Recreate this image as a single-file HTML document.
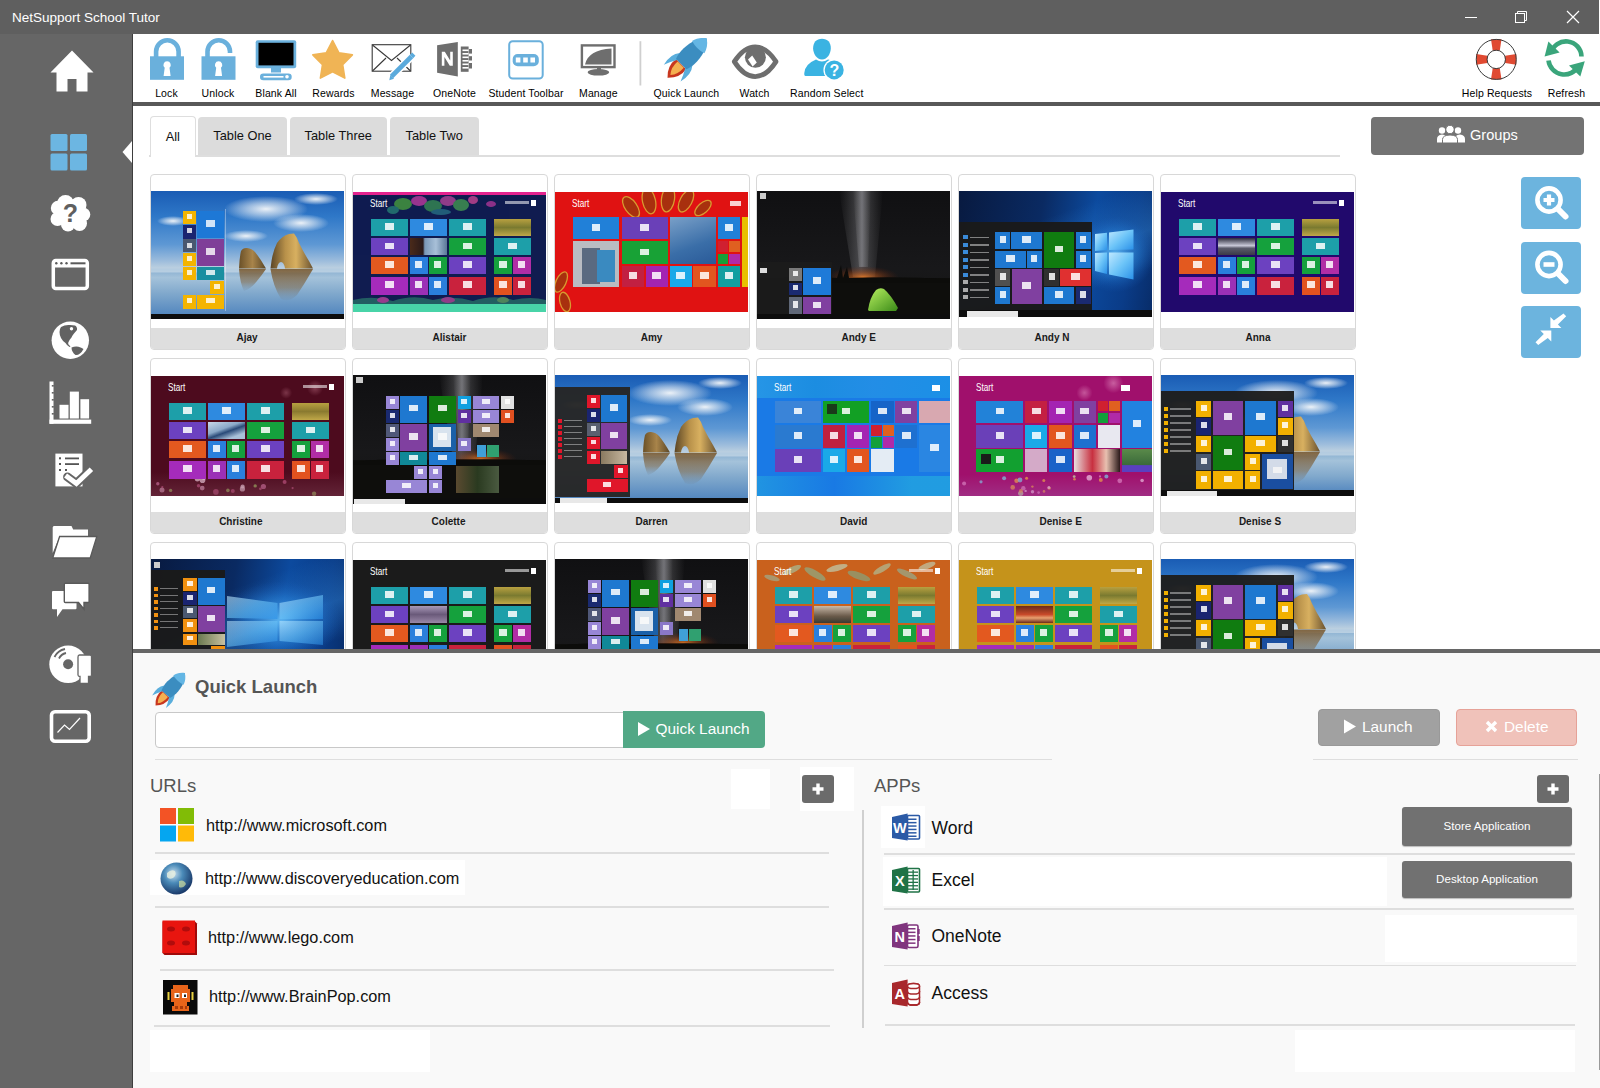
<!DOCTYPE html>
<html><head><meta charset="utf-8">
<style>
*{margin:0;padding:0;box-sizing:border-box}
html,body{width:1600px;height:1088px;overflow:hidden;background:#fff;font-family:"Liberation Sans",sans-serif}
.a{position:absolute}
#title{left:0;top:0;width:1599px;height:34px;background:#5f5f5f;color:#fff;font-size:13.5px}
#side{left:0;top:34px;width:132px;height:1054px;background:#666}
#sideb{left:131.5px;top:34px;width:1.8px;height:1054px;background:#3e3e3e}
#tool{left:133px;top:34px;width:1467px;height:68px;background:#fff}
#toolline{left:133px;top:102px;width:1467px;height:4px;background:#585858}
#content{left:133px;top:106px;width:1467px;height:543px;background:#fff;overflow:hidden}
#panelline{left:133px;top:649px;width:1467px;height:4px;background:#666}
#panel{left:133px;top:653px;width:1467px;height:435px;background:#f9f9f9}
.tl{font-size:10.5px;color:#000;letter-spacing:0.12px;text-align:center;white-space:nowrap;top:86.8px}
</style></head><body>
<div id="title" class="a"><span class="a" style="left:12px;top:10px">NetSupport School Tutor</span>
<svg class="a" style="left:1460px;top:8px" width="130" height="20" viewBox="0 0 130 20">
<line x1="5" y1="9.5" x2="17" y2="9.5" stroke="#fff" stroke-width="1"/>
<rect x="55.5" y="5.5" width="9" height="9" fill="none" stroke="#fff" stroke-width="1"/>
<path d="M57.5 5.5V3.5h9v9h-2" fill="none" stroke="#fff" stroke-width="1"/>
<path d="M107 3L119 15M119 3L107 15" stroke="#fff" stroke-width="1.2"/>
</svg>
</div>
<div id="side" class="a"></div>
<div id="sideb" class="a"></div>
<svg class="a" style="left:0;top:0" width="132" height="1088" viewBox="0 0 132 1088">
<!-- home -->
<path d="M72 50.5L93.5 72.5H87.5V91.5H76.5V79H67.5V91.5H56.5V72.5H50.5Z" fill="#fff"/>
<!-- grid -->
<g fill="#6cb6e2"><rect x="50.5" y="134" width="17" height="17" rx="1.5"/><rect x="70" y="134" width="17" height="17" rx="1.5"/><rect x="50.5" y="153.5" width="17" height="17" rx="1.5"/><rect x="70" y="153.5" width="17" height="17" rx="1.5"/></g>
<!-- cloud -->
<g fill="#fff"><ellipse cx="70" cy="213.5" rx="15" ry="12"/><circle cx="65.5" cy="203.5" r="8.5"/><circle cx="78.5" cy="205" r="8"/><circle cx="83.5" cy="214.5" r="6.8"/><circle cx="79.5" cy="223.5" r="7.5"/><circle cx="68" cy="224.5" r="7"/><circle cx="57.5" cy="219" r="7"/><circle cx="58" cy="208" r="7.2"/></g>
<text x="70.5" y="221.5" font-family="Liberation Sans" font-weight="700" font-size="25" fill="#5f5f5f" text-anchor="middle">?</text>
<!-- browser -->
<rect x="53.3" y="260.5" width="34" height="28" rx="2.5" fill="none" stroke="#fff" stroke-width="3.5"/>
<rect x="53" y="260" width="34.5" height="7.5" fill="#fff"/>
<g fill="#5a5a5a"><circle cx="56.3" cy="263.3" r="1.2"/><circle cx="61.4" cy="263.3" r="1.2"/><circle cx="66.5" cy="263.3" r="1.2"/><rect x="70.5" y="262.3" width="15" height="2"/></g>
<!-- globe -->
<circle cx="70.3" cy="340.3" r="18.7" fill="#fff"/>
<path d="M61 327Q65 324.5 70 325L75 325.5Q77.5 327 77 330L74 333.5Q72 336 71.5 337.5Q69.5 339.5 69 341Q67.5 343 68.5 344.5L70.5 346.5L69.5 347Q66.5 345 65.5 343Q62.5 341 61 338Q59.5 335 59.5 332Q59.5 329 61 327Z" fill="#626262"/>
<circle cx="71.5" cy="328.8" r="1.7" fill="#fff"/>
<path d="M71.5 347.5Q75 346 78.5 346.7Q81.5 347.5 83.5 349Q82 352 80 353.5Q77.5 355.5 75.5 355Q73.5 353.5 72.5 351.5Q71.5 349.5 71.5 347.5Z" fill="#626262"/>
<!-- chart -->
<g fill="#fff"><rect x="49.5" y="381.5" width="4" height="42.3"/><rect x="49.5" y="419.6" width="41.7" height="4.2"/>
<rect x="59.5" y="404.8" width="9" height="13.7"/><rect x="69.8" y="391.6" width="9.1" height="26.9"/><rect x="80.4" y="399.2" width="8.7" height="19.3"/></g>
<g fill="#666"><rect x="51.8" y="385" width="2" height="1.6"/><rect x="51.8" y="392" width="2" height="1.6"/><rect x="51.8" y="399" width="2" height="1.6"/><rect x="51.8" y="406" width="2" height="1.6"/><rect x="51.8" y="413" width="2" height="1.6"/></g>
<!-- checklist -->
<rect x="55.4" y="453.6" width="27.1" height="32.8" fill="#fff"/>
<g fill="#555"><rect x="59" y="457.3" width="2" height="2"/><rect x="59" y="463" width="2" height="2"/><rect x="59" y="469" width="2" height="2"/><rect x="65" y="469" width="2" height="2"/><rect x="65" y="457.5" width="14" height="1.8"/><rect x="65" y="463.2" width="14" height="1.8"/></g>
<path d="M67.6 477L76.4 483.5L89.6 471" fill="none" stroke="#666" stroke-width="9" stroke-linejoin="miter" stroke-linecap="round"/>
<path d="M67.6 477L76.4 483.5L89.6 471" fill="none" stroke="#fff" stroke-width="5" stroke-linejoin="miter" stroke-linecap="square"/>
<!-- folder -->
<path d="M52.7 556V527.5Q52.7 526 54 526H71.5L73.2 529.4H88V536.5H59.6L52.7 553Z" fill="#fff"/>
<path d="M59.6 536.5H96.8L90.2 558H52.7Z" fill="#fff" stroke="#5a5a5a" stroke-width="1.3"/>
<!-- chat -->
<path d="M53 591H75.5Q76.5 591 76.5 592V608.2Q76.5 609.2 75.5 609.2H62.5L57 616.9V609.2H53Q52 609.2 52 608.2V592Q52 591 53 591Z" fill="#fff"/>
<path d="M65.3 583.2H88.1Q89.1 583.2 89.1 584.2V601.5Q89.1 602.5 88.1 602.5H84V609.2L78.5 602.5H65.3Q64.3 602.5 64.3 601.5V584.2Q64.3 583.2 65.3 583.2Z" fill="#fff" stroke="#5a5a5a" stroke-width="1.4"/>
<!-- disc -->
<circle cx="68.1" cy="664.3" r="18.8" fill="#fff"/>
<circle cx="68.1" cy="664.3" r="5" fill="#666"/>
<path d="M54.5 657A15 15 0 0 1 65 649" fill="none" stroke="#666" stroke-width="1.8"/>
<path d="M59 658.5A10.5 10.5 0 0 1 66 653" fill="none" stroke="#666" stroke-width="1.8"/>
<path d="M79.5 655H90Q91.5 655 91.5 656.5V675Q91.5 676.5 90 676.5H88.5V683.5H80V676.5Q78 676.5 78 675V657Q78 655 79.5 655Z" fill="#fff" stroke="#666" stroke-width="1.3"/>
<!-- monitor -->
<rect x="51.5" y="711.8" width="37.7" height="29.5" rx="3.5" fill="none" stroke="#fff" stroke-width="3.6"/>
<path d="M57.5 732.5L64.5 725L69.5 729.5L80 718" fill="none" stroke="#fff" stroke-width="1.2"/>
<!-- notch -->
<path d="M132 141L122.5 152L132 163Z" fill="#fff"/>
</svg>
<div id="tool" class="a"></div>
<div id="toolline" class="a"></div>
<svg class="a" style="left:0;top:0" width="1600" height="100" viewBox="0 0 1600 100">
<!-- lock -->
<path d="M156.1 58V51.5A11.25 11.25 0 0 1 178.6 51.5V58" fill="none" stroke="#6ab0dc" stroke-width="4.6"/>
<rect x="150" y="56.3" width="34" height="23.5" fill="#6ab0dc"/>
<path d="M167.1 61.3A3.7 3.7 0 0 1 169.5 67.8L170.6 76H163.6L164.7 67.8A3.7 3.7 0 0 1 167.1 61.3Z" fill="#fff"/>
<!-- unlock -->
<path d="M207.5 58V51.5A11.25 11.25 0 0 1 230 51.5V53" fill="none" stroke="#6ab0dc" stroke-width="4.6"/>
<rect x="201.5" y="56.3" width="34" height="23.5" fill="#6ab0dc"/>
<path d="M218.6 61.3A3.7 3.7 0 0 1 221 67.8L222.1 76H215.1L216.2 67.8A3.7 3.7 0 0 1 218.6 61.3Z" fill="#fff"/>
<!-- blank all -->
<rect x="255.7" y="40.2" width="40.5" height="28" rx="2" fill="#6ab0dc"/>
<rect x="258.5" y="42.8" width="35" height="22.6" fill="#000"/>
<rect x="271" y="68" width="10" height="4.5" fill="#6ab0dc"/>
<rect x="260" y="73.5" width="31.7" height="6.7" rx="3.3" fill="#6ab0dc"/>
<rect x="263.5" y="76" width="20" height="1.6" fill="#fff"/>
<circle cx="287" cy="76.8" r="1.8" fill="#fff"/>
<!-- star -->
<path d="M332.60 40.50L338.83 52.72L352.38 54.87L342.68 64.58L344.83 78.13L332.60 71.90L320.37 78.13L322.52 64.58L312.82 54.87L326.37 52.72Z" fill="#f0b455" stroke="#f0b455" stroke-width="1.6" stroke-linejoin="round"/>
<!-- message -->
<rect x="372.2" y="44.7" width="38.6" height="26.5" fill="#fff" stroke="#3a3a3a" stroke-width="1.1"/>
<path d="M372.5 45L391.5 60.5L410.5 45M372.5 71L386 58M410.5 71L397 58" fill="none" stroke="#3a3a3a" stroke-width="1.1"/>
<path d="M391 77L412 56" stroke="#fff" stroke-width="8"/>
<path d="M391.5 76.5L411.5 56.5" stroke="#5aaadc" stroke-width="4.6"/>
<path d="M389.3 80.3L390.3 75L394 78.7Z" fill="#5aaadc"/>
<path d="M411.5 56.5L413.8 54.2" stroke="#5aaadc" stroke-width="4.6"/>
<!-- onenote -->
<path d="M437.1 45.3L457.8 41.9V76.6L437.1 72.7Z" fill="#6e6e6e"/>
<path d="M441.8 65.8V51.8H444.8L450.2 60.6V51.8H452.8V65.8H449.8L444.4 57V65.8Z" fill="#fff"/>
<rect x="460.8" y="46.5" width="7.8" height="25.3" fill="#6e6e6e"/>
<g fill="#fff"><rect x="462.5" y="49.5" width="6" height="1.6"/><rect x="462.5" y="53" width="6" height="1.6"/><rect x="462.5" y="56.5" width="6" height="1.6"/><rect x="462.5" y="60" width="6" height="1.6"/><rect x="462.5" y="63.5" width="6" height="1.6"/><rect x="462.5" y="67" width="6" height="1.6"/></g>
<g fill="#6e6e6e"><rect x="469" y="49" width="3" height="4.6"/><rect x="469" y="56.2" width="3" height="4.3"/><rect x="469" y="63" width="3" height="5.5"/></g>
<!-- student toolbar -->
<rect x="509.2" y="41.2" width="33.5" height="37.3" rx="3.5" fill="none" stroke="#6ab0dc" stroke-width="2"/>
<rect x="512.7" y="54" width="26.1" height="12.3" rx="5" fill="#6ab0dc"/>
<g fill="#fff"><rect x="515.8" y="57.5" width="4.6" height="5"/><rect x="523.2" y="57.5" width="4.6" height="5"/><rect x="530.4" y="57.5" width="4.6" height="5"/></g>
<!-- manage -->
<rect x="581.9" y="45.4" width="32.6" height="21.7" fill="none" stroke="#6e6e6e" stroke-width="2.4"/>
<path d="M585 64.5Q588 50 611.5 48.5V64.5Z" fill="#6e6e6e"/>
<path d="M597 67H601V70H597Z" fill="#6e6e6e"/>
<ellipse cx="598.4" cy="72.3" rx="10.8" ry="3.3" fill="#6e6e6e"/>
<!-- separator -->
<rect x="639.5" y="41.2" width="1.8" height="44.3" fill="#cfcfcf"/>
<!-- rocket -->
<g transform="translate(680.7,64.6) rotate(45) scale(1.27)">
<path d="M-5.6 -0.5Q-7 8 0 14.7Q7 8 5.6 -0.5Z" fill="#c8361e"/>
<path d="M-3.4 0Q-4 7 0 11.5Q4 7 3.4 0Z" fill="#f4b050"/>
<path d="M-7 -6Q-11.8 -0.5 -9.3 9.5Q-7.5 4.5 -4.5 -0.5Z" fill="#5aaedc"/>
<path d="M7 -6Q11.8 -0.5 9.3 9.5Q7.5 4.5 4.5 -0.5Z" fill="#5aaedc"/>
<path d="M0 -29C5.5 -25 7.6 -16 7.4 -8Q7 -3 5.7 -0.5H-5.7Q-7 -3 -7.4 -8C-7.6 -16 -5.5 -25 0 -29Z" fill="#3b8dc0"/>
<path d="M0 -29C3.8 -26.5 6 -23 6.9 -19.5Q0 -17.5 -6.9 -19.5C-6 -23 -3.8 -26.5 0 -29Z" fill="#64b6e4"/>
</g>
<!-- eye -->
<path d="M734.3 61.6Q744 46.8 755.2 46.8Q766.4 46.8 776 61.6Q766.4 76.6 755.2 76.6Q744 76.6 734.3 61.6Z" fill="none" stroke="#6e6e6e" stroke-width="4.8" stroke-linejoin="round"/>
<circle cx="755.4" cy="57.3" r="10.5" fill="#6e6e6e"/>
<path d="M748 59.5L752.2 55.5L756.8 62.5L752.6 66.5Z" fill="#fff"/>
<!-- random select -->
<path d="M822 38.8C827.5 38.8 831 42.5 830.8 48.5C830.6 53.5 827.5 59.5 822 59.5C816.5 59.5 813.3 53.5 813.1 48.5C813 42.5 816.5 38.8 822 38.8Z" fill="#3ab3e2"/>
<path d="M816 59.5Q822 63.5 828 59.5Q836 61 838 66L830 76H805.5Q804 76 804.3 73Q805 64 816 59.5Z" fill="#3ab3e2"/>
<circle cx="834.2" cy="69.9" r="10.8" fill="#fff"/>
<circle cx="834.2" cy="69.9" r="9.5" fill="#3ab3e2"/>
<text x="834.5" y="76.3" font-family="Liberation Sans" font-weight="700" font-size="16" fill="#fff" text-anchor="middle">?</text>
<!-- help requests -->
<circle cx="1496.25" cy="59.4" r="14.6" fill="none" stroke="#fff" stroke-width="11.3"/>
<g fill="#e04a32">
<path d="M1491 39.3H1501.5L1499.8 50.5H1492.7Z"/>
<path d="M1491 79.5H1501.5L1499.8 68.3H1492.7Z"/>
<path d="M1476.2 54H1476.2L1487.4 55.8V63L1476.2 64.8Z"/>
<path d="M1516.3 54L1505.1 55.8V63L1516.3 64.8Z"/>
</g>
<circle cx="1496.25" cy="59.4" r="20" fill="none" stroke="#3a3a3a" stroke-width="1"/>
<circle cx="1496.25" cy="59.4" r="9.2" fill="none" stroke="#3a3a3a" stroke-width="1"/>
<!-- refresh -->
<path d="M1551 53A15.5 15.5 0 0 1 1581.5 56.5" fill="none" stroke="#3aa57b" stroke-width="4.6"/>
<path d="M1548.4 41.4L1544.6 56.5L1559.6 52.6Z" fill="#3aa57b"/>
<path d="M1548.5 60.5A16 16 0 0 0 1578.5 66" fill="none" stroke="#3aa57b" stroke-width="4.6"/>
<path d="M1584.8 61.25L1569 65.4L1580.3 76.6Z" fill="#3aa57b"/>
</svg>
<div class="a tl" style="left:126.5px;width:80px">Lock</div>
<div class="a tl" style="left:178px;width:80px">Unlock</div>
<div class="a tl" style="left:236px;width:80px">Blank All</div>
<div class="a tl" style="left:293.5px;width:80px">Rewards</div>
<div class="a tl" style="left:352.5px;width:80px">Message</div>
<div class="a tl" style="left:414.5px;width:80px">OneNote</div>
<div class="a tl" style="left:486px;width:80px">Student Toolbar</div>
<div class="a tl" style="left:558.4px;width:80px">Manage</div>
<div class="a tl" style="left:646.4px;width:80px">Quick Launch</div>
<div class="a tl" style="left:714.5px;width:80px">Watch</div>
<div class="a tl" style="left:786.8px;width:80px">Random Select</div>
<div class="a tl" style="left:1457px;width:80px">Help Requests</div>
<div class="a tl" style="left:1526.5px;width:80px">Refresh</div>
<div id="content" class="a"></div>
<div id="panelline" class="a"></div>
<div id="panel" class="a"></div>
<!--CONTENT-->
<style>
.tab{position:absolute;top:117px;height:38px;background:#dcdcdc;border-radius:4px 4px 0 0;font-size:12.8px;color:#111;text-align:center;line-height:37px}
.btnz{position:absolute;left:1521px;width:60px;height:52px;background:#6cb4de;border-radius:4px}
</style>
<div class="a" style="left:149px;top:155px;width:1191px;height:1.5px;background:#dedede"></div>
<div class="tab" style="left:149.5px;top:116px;width:46.5px;height:41px;background:#fff;border:1px solid #dedede;border-bottom:none;line-height:40px">All</div>
<div class="tab" style="left:198px;width:89px">Table One</div>
<div class="tab" style="left:289.5px;width:97.5px">Table Three</div>
<div class="tab" style="left:390px;width:88.5px">Table Two</div>
<div class="a" style="left:1371px;top:116.5px;width:213px;height:38px;background:#737373;border-radius:4px"></div>
<svg class="a" style="left:1436px;top:125px" width="30" height="20" viewBox="0 0 30 20">
<g fill="#fff">
<circle cx="6" cy="5.5" r="3.2"/><path d="M1 17.5V14Q1 10 6 9.5Q9 9.5 10 11L8 17.5Z"/>
<circle cx="22" cy="5.5" r="3.2"/><path d="M29 17.5V14Q29 10 24 9.5Q21 9.5 20 11L22 17.5Z"/>
<circle cx="14" cy="4.5" r="4.2" stroke="#737373" stroke-width="1"/><path d="M6.5 18V14.5Q6.5 10.2 14 10Q21.5 10.2 21.5 14.5V18Z" stroke="#737373" stroke-width="1"/>
</g></svg>
<div class="a" style="left:1470px;top:126px;font-size:14.6px;color:#fff;line-height:18px">Groups</div>
<div class="btnz" style="top:177px"></div>
<div class="btnz" style="top:241.5px"></div>
<div class="btnz" style="top:306px"></div>
<svg class="a" style="left:1521px;top:177px" width="60" height="182" viewBox="0 0 60 182">
<g fill="none" stroke="#fff">
<circle cx="28" cy="23" r="11.6" stroke-width="4.6"/>
<path d="M37 32L44.5 39.5" stroke-width="6" stroke-linecap="round"/>
<path d="M28 17.5V28.5M22.5 23H33.5" stroke-width="4.2"/>
<circle cx="28" cy="87.5" r="11.6" stroke-width="4.6"/>
<path d="M37 96.5L44.5 104" stroke-width="6" stroke-linecap="round"/>
<path d="M22.5 87.5H33.5" stroke-width="4.6"/>
</g>
<g fill="#fff">
<path d="M17.2 168L14.5 165.3L22.8 157L19.3 153.5H30.3V164.5L26.8 161Z"/>
<path d="M42.5 136.5L45.2 139.2L36.9 147.5L40.4 151H29.4V140L32.9 143.5Z"/>
</g>
</svg>
<!--/CONTENT-->
<!--THUMBS-->
<svg width="0" height="0" style="position:absolute"><defs>
<linearGradient id="rkA" x1="0" x2="1" y1="0" y2="0"><stop offset="0" stop-color="#5a4526"/><stop offset=".35" stop-color="#b8914a"/><stop offset=".6" stop-color="#d8b060"/><stop offset="1" stop-color="#6a5230"/></linearGradient>
<linearGradient id="rkB" x1="0" x2="1" y1="0" y2="0"><stop offset="0" stop-color="#6a5028"/><stop offset=".5" stop-color="#a8844a"/><stop offset="1" stop-color="#5a4626"/></linearGradient>
<linearGradient id="rfl" x1="0" x2="0" y1="0" y2="1"><stop offset="0" stop-color="#7a5a30" stop-opacity=".9"/><stop offset=".6" stop-color="#806848" stop-opacity=".55"/><stop offset="1" stop-color="#708090" stop-opacity=".1"/></linearGradient>
<radialGradient id="cld"><stop offset="0" stop-color="#f6f8fa" stop-opacity=".95"/><stop offset=".45" stop-color="#e8eef4" stop-opacity=".6"/><stop offset="1" stop-color="#f4f6f8" stop-opacity="0"/></radialGradient>
<radialGradient id="glow"><stop offset="0" stop-color="#e07828" stop-opacity=".9"/><stop offset=".5" stop-color="#a04818" stop-opacity=".45"/><stop offset="1" stop-color="#602010" stop-opacity="0"/></radialGradient>
<radialGradient id="hglow"><stop offset="0" stop-color="#6cc8ff" stop-opacity=".8"/><stop offset=".6" stop-color="#2a88e0" stop-opacity=".4"/><stop offset="1" stop-color="#1a60c0" stop-opacity="0"/></radialGradient>
<linearGradient id="pane" x1="0" x2="1" y1="0" y2="1"><stop offset="0" stop-color="#bfe8ff"/><stop offset=".5" stop-color="#6cc4f8"/><stop offset="1" stop-color="#2a90e8"/></linearGradient>
<linearGradient id="mw" x1="0" x2="1" y1="0" y2="0"><stop offset="0" stop-color="#888" stop-opacity="0"/><stop offset=".5" stop-color="#9a9aa0" stop-opacity=".75"/><stop offset="1" stop-color="#888" stop-opacity="0"/></linearGradient>
</defs></svg>
<style>
.grid{position:absolute;left:133px;top:106px;width:1380px;height:543px;overflow:hidden}
.card{position:absolute;width:196px;height:176px;border:1.5px solid #d8d8d8;border-radius:4px;background:#fff;overflow:hidden}
.card .im{position:absolute;left:0;width:193px;overflow:hidden}
.card .im i,.card .im b{position:absolute;display:block;font-style:normal;font-weight:normal;line-height:1}
.card .lb{position:absolute;left:0;right:0;top:152.5px;height:24px;background:#dedede;font-size:10px;font-weight:bold;color:#1a1a1a;text-align:center;line-height:19px}
</style>
<div class="grid">
<div class="card" style="left:17px;top:68px"><div class="im" style="top:16px;height:128px;background:linear-gradient(180deg,#1a5cb4 0%,#2f78c8 20.0%,#5e98d4 41.8%,#9cbcdc 54.5%,#bcd0e0 60.3%,#86aed0 61.1%,#a4c2da 67.6%,#80a8cc 80.1%,#4a80bc 100%)"><svg style="position:absolute;left:0;top:0" width="193" height="128" viewBox="0 0 193 128"><ellipse cx="115" cy="18" rx="42" ry="13" fill="url(#cld)"/><ellipse cx="150" cy="32" rx="28" ry="9" fill="url(#cld)"/><ellipse cx="95" cy="45" rx="22" ry="6" fill="url(#cld)"/><ellipse cx="165" cy="8" rx="22" ry="6" fill="url(#cld)"/><ellipse cx="22" cy="30" rx="16" ry="5" fill="url(#cld)"/><g transform="translate(0,0)"><rect x="-12" y="77.5" width="217" height="4" fill="#d8e4ec" opacity=".55"/><path d="M88 78Q89 92 93 100Q100 98 106 90Q111 84 115 78Z" fill="url(#rfl)"/><path d="M119.5 78Q122 95 130 108Q138 112 146 104Q154 92 162 78Z" fill="url(#rfl)"/><path d="M88 77.5Q88.5 66 90 60Q92 56.5 96 57Q101 57.5 104 61Q109 67 115 77.5Z" fill="url(#rkB)"/><path d="M119.5 77.5L120.5 70Q122 60 126 52Q131 45 138 43L143 42.5Q146 46 148 52Q153 62 158 70L162 77.5H134Q133 71 130 71Q127 71 126 77.5Z" fill="url(#rkA)"/></g></svg><i style="left:32.0px;top:20.0px;width:12.8px;height:13.0px;background:#f4b400;"></i><i style="left:35.8px;top:23.0px;width:5.1px;height:4.9px;background:rgba(255,255,255,.8)"></i><i style="left:32.0px;top:34.0px;width:12.8px;height:13.5px;background:#1a2470;"></i><i style="left:35.8px;top:37.2px;width:5.1px;height:5.1px;background:rgba(255,255,255,.8)"></i><i style="left:32.0px;top:48.4px;width:12.8px;height:13.1px;background:#4a5870;"></i><i style="left:35.8px;top:51.5px;width:5.1px;height:5.0px;background:rgba(255,255,255,.8)"></i><i style="left:32.0px;top:62.0px;width:12.8px;height:13.0px;background:#f4b400;"></i><i style="left:35.8px;top:65.0px;width:5.1px;height:4.9px;background:rgba(255,255,255,.8)"></i><i style="left:32.0px;top:76.0px;width:12.8px;height:13.0px;background:#f4b400;"></i><i style="left:35.8px;top:79.0px;width:5.1px;height:4.9px;background:rgba(255,255,255,.8)"></i><i style="left:46.0px;top:20.0px;width:26.8px;height:27.0px;background:#1d78d6;"></i><i style="left:55.1px;top:29.2px;width:8.5px;height:6.5px;background:rgba(255,255,255,.8)"></i><i style="left:46.0px;top:48.0px;width:26.8px;height:27.0px;background:#7f3e98;"></i><i style="left:55.1px;top:57.2px;width:8.5px;height:6.5px;background:rgba(255,255,255,.8)"></i><i style="left:46.0px;top:76.0px;width:26.8px;height:13.0px;background:#1a8fa0;"></i><i style="left:55.1px;top:79.0px;width:8.5px;height:4.9px;background:rgba(255,255,255,.8)"></i><i style="left:59.0px;top:90.0px;width:13.8px;height:13.0px;background:#f4b400;"></i><i style="left:63.1px;top:93.0px;width:5.5px;height:4.9px;background:rgba(255,255,255,.8)"></i><i style="left:32.0px;top:104.0px;width:12.8px;height:13.5px;background:#f4b400;"></i><i style="left:35.8px;top:107.2px;width:5.1px;height:5.1px;background:rgba(255,255,255,.8)"></i><i style="left:46.0px;top:104.0px;width:26.8px;height:13.5px;background:#f4b400;"></i><i style="left:55.1px;top:107.2px;width:8.5px;height:5.1px;background:rgba(255,255,255,.8)"></i><i style="left:73.8px;top:18.0px;width:0.8px;height:102.0px;background:rgba(255,255,255,.35);"></i><i style="left:0.0px;top:123.0px;width:193.0px;height:5.0px;background:#0d0d0d;"></i></div><div class="lb"><span style="position:relative;left:-1px">Ajay</span></div></div>
<div class="card" style="left:219px;top:68px"><div class="im" style="top:16.5px;height:120px;background:#101c50"><i style="left:0.0px;top:0.0px;width:193.0px;height:3.5px;background:#e4238e;"></i><svg style="position:absolute;left:0;top:0" width="193" height="120" viewBox="0 0 193 120"><g opacity=".7"><ellipse cx="50" cy="12" rx="9" ry="6" fill="#4fae3a"/><ellipse cx="66" cy="9" rx="8" ry="5" fill="#d43fa8"/><ellipse cx="80" cy="14" rx="9" ry="6" fill="#3c9a52"/><ellipse cx="95" cy="9" rx="8" ry="5" fill="#c84aa0"/><ellipse cx="108" cy="13" rx="8" ry="6" fill="#4aa850"/><ellipse cx="120" cy="8" rx="5" ry="4" fill="#e04a9a"/><ellipse cx="40" cy="18" rx="6" ry="4" fill="#2a8a7a"/><ellipse cx="88" cy="20" rx="10" ry="3" fill="#2a7a8a"/><ellipse cx="138" cy="12" rx="5" ry="3" fill="#c03aa0"/><path d="M0 108Q20 103 40 109Q60 102 80 108Q100 103 120 109Q140 102 160 108Q178 104 193 108V113H0Z" fill="#2a7a6a"/><ellipse cx="30" cy="108" rx="6" ry="3" fill="#d04aa8"/><ellipse cx="95" cy="108" rx="7" ry="3" fill="#c84aa0"/><ellipse cx="150" cy="108" rx="6" ry="3" fill="#6ab060"/></g></svg><i style="left:0.0px;top:112.0px;width:193.0px;height:8.0px;background:#48d4a8;"></i><i style="left:18.2px;top:27.4px;width:36.8px;height:17.2px;background:#1d9fa9;"></i><i style="left:32.4px;top:31.8px;width:8.5px;height:6.5px;background:rgba(255,255,255,.85)"></i><i style="left:56.6px;top:27.4px;width:37.2px;height:17.2px;background:#2e8ae0;"></i><i style="left:71.0px;top:31.8px;width:8.5px;height:6.5px;background:rgba(255,255,255,.85)"></i><i style="left:95.6px;top:27.4px;width:37.2px;height:17.2px;background:#1d9fa9;"></i><i style="left:110.0px;top:31.8px;width:8.5px;height:6.5px;background:rgba(255,255,255,.85)"></i><i style="left:141.0px;top:27.4px;width:37.0px;height:17.2px;background:linear-gradient(180deg,#b8a040,#7a7a30 50%,#c0a848);"></i><i style="left:18.2px;top:46.6px;width:36.8px;height:17.2px;background:#6c41c0;"></i><i style="left:32.4px;top:51.0px;width:8.5px;height:6.5px;background:rgba(255,255,255,.85)"></i><i style="left:56.6px;top:46.6px;width:37.2px;height:17.2px;background:linear-gradient(90deg,#4a2a1a 0%,#2a1a1a 35%,#7a98b8 40%,#a8c0d8 70%,#5a7898 100%);"></i><i style="left:95.6px;top:46.6px;width:37.2px;height:17.2px;background:#15a13d;"></i><i style="left:110.0px;top:51.0px;width:8.5px;height:6.5px;background:rgba(255,255,255,.85)"></i><i style="left:141.0px;top:46.6px;width:37.0px;height:17.2px;background:#1d9fa9;"></i><i style="left:155.2px;top:51.0px;width:8.5px;height:6.5px;background:rgba(255,255,255,.85)"></i><i style="left:18.2px;top:65.6px;width:36.8px;height:17.2px;background:#e3591f;"></i><i style="left:32.4px;top:69.9px;width:8.5px;height:6.5px;background:rgba(255,255,255,.85)"></i><i style="left:56.6px;top:65.6px;width:18.4px;height:17.2px;background:#2a7fdc;"></i><i style="left:62.1px;top:69.9px;width:7.4px;height:6.5px;background:rgba(255,255,255,.85)"></i><i style="left:75.5px;top:65.6px;width:18.3px;height:17.2px;background:#15a13d;"></i><i style="left:81.0px;top:69.9px;width:7.3px;height:6.5px;background:rgba(255,255,255,.85)"></i><i style="left:95.6px;top:65.6px;width:37.2px;height:17.2px;background:#6c41c0;"></i><i style="left:110.0px;top:69.9px;width:8.5px;height:6.5px;background:rgba(255,255,255,.85)"></i><i style="left:141.0px;top:65.6px;width:18.0px;height:17.2px;background:#15a13d;"></i><i style="left:146.4px;top:69.9px;width:7.2px;height:6.5px;background:rgba(255,255,255,.85)"></i><i style="left:159.5px;top:65.6px;width:18.5px;height:17.2px;background:#b12da6;"></i><i style="left:165.1px;top:69.9px;width:7.4px;height:6.5px;background:rgba(255,255,255,.85)"></i><i style="left:18.2px;top:85.0px;width:36.8px;height:18.0px;background:#a52bbb;"></i><i style="left:32.4px;top:89.8px;width:8.5px;height:6.5px;background:rgba(255,255,255,.85)"></i><i style="left:56.6px;top:85.0px;width:18.4px;height:18.0px;background:#9b30b6;"></i><i style="left:62.1px;top:89.8px;width:7.4px;height:6.5px;background:rgba(255,255,255,.85)"></i><i style="left:75.5px;top:85.0px;width:18.3px;height:18.0px;background:#2a7fdc;"></i><i style="left:81.0px;top:89.8px;width:7.3px;height:6.5px;background:rgba(255,255,255,.85)"></i><i style="left:95.6px;top:85.0px;width:37.2px;height:18.0px;background:#c9223d;"></i><i style="left:110.0px;top:89.8px;width:8.5px;height:6.5px;background:rgba(255,255,255,.85)"></i><i style="left:141.0px;top:85.0px;width:18.0px;height:18.0px;background:#e2521f;"></i><i style="left:146.4px;top:89.8px;width:7.2px;height:6.5px;background:rgba(255,255,255,.85)"></i><i style="left:159.5px;top:85.0px;width:18.5px;height:18.0px;background:#c9223d;"></i><i style="left:165.1px;top:89.8px;width:7.4px;height:6.5px;background:rgba(255,255,255,.85)"></i><b style="left:17px;top:6px;font-size:10.5px;color:#fff;transform:scaleX(.78);transform-origin:0 0">Start</b><i style="left:152.0px;top:9.0px;width:24.0px;height:3.0px;background:rgba(255,255,255,.55);"></i><i style="left:178.0px;top:8.0px;width:5.0px;height:6.0px;background:#fff;"></i></div><div class="lb"><span style="position:relative;left:-0.5px">Alistair</span></div></div>
<div class="card" style="left:421px;top:68px"><div class="im" style="top:16.5px;height:120px;background:#e01212"><svg style="position:absolute;left:0;top:0" width="193" height="120" viewBox="0 0 193 120"><g fill="#a8300e" stroke="#d89a30" stroke-width="1.3"><ellipse cx="76" cy="15" rx="6" ry="12" transform="rotate(-35 76 15)"/><ellipse cx="94" cy="9" rx="6.5" ry="13" transform="rotate(-12 94 9)"/><ellipse cx="113" cy="7" rx="6.5" ry="13" transform="rotate(8 113 7)"/><ellipse cx="131" cy="9" rx="6" ry="12" transform="rotate(28 131 9)"/><ellipse cx="148" cy="16" rx="5" ry="10" transform="rotate(48 148 16)"/><ellipse cx="6" cy="90" rx="5" ry="11" transform="rotate(25 6 90)"/><ellipse cx="10" cy="110" rx="5" ry="10" transform="rotate(-15 10 110)"/></g></svg><i style="left:18.0px;top:25.6px;width:46.0px;height:22.4px;background:#2180d8;"></i><i style="left:36.8px;top:32.5px;width:8.5px;height:6.5px;background:rgba(255,255,255,.85)"></i><i style="left:18.0px;top:49.7px;width:46.0px;height:46.3px;background:#b9bcc2;"></i><i style="left:36.8px;top:68.6px;width:8.5px;height:6.5px;background:rgba(255,255,255,.85)"></i><i style="left:66.6px;top:25.6px;width:46.2px;height:22.4px;background:#6a40b8;"></i><i style="left:85.4px;top:32.5px;width:8.5px;height:6.5px;background:rgba(255,255,255,.85)"></i><i style="left:66.6px;top:49.7px;width:46.2px;height:23.1px;background:#18a236;"></i><i style="left:85.4px;top:57.0px;width:8.5px;height:6.5px;background:rgba(255,255,255,.85)"></i><i style="left:114.8px;top:25.6px;width:46.2px;height:47.2px;background:linear-gradient(160deg,#7aa0c8,#3a6ea8 60%,#2a5a98);"></i><i style="left:66.6px;top:74.3px;width:22.4px;height:21.7px;background:#c22042;"></i><i style="left:73.5px;top:80.9px;width:8.5px;height:6.5px;background:rgba(255,255,255,.85)"></i><i style="left:90.5px;top:74.3px;width:22.3px;height:21.7px;background:#a324b2;"></i><i style="left:97.4px;top:80.9px;width:8.5px;height:6.5px;background:rgba(255,255,255,.85)"></i><i style="left:114.8px;top:74.3px;width:21.8px;height:21.7px;background:#1aa9e8;"></i><i style="left:121.4px;top:80.9px;width:8.5px;height:6.5px;background:rgba(255,255,255,.85)"></i><i style="left:138.0px;top:74.3px;width:23.0px;height:21.7px;background:#e2561f;"></i><i style="left:145.2px;top:80.9px;width:8.5px;height:6.5px;background:rgba(255,255,255,.85)"></i><i style="left:163.0px;top:25.6px;width:21.5px;height:22.4px;background:#2180d8;"></i><i style="left:169.5px;top:32.5px;width:8.5px;height:6.5px;background:rgba(255,255,255,.85)"></i><i style="left:163.0px;top:49.7px;width:10.0px;height:10.8px;background:#d02030;"></i><i style="left:174.0px;top:49.7px;width:10.5px;height:10.8px;background:#e06020;"></i><i style="left:163.0px;top:62.0px;width:10.0px;height:10.8px;background:#15a03a;"></i><i style="left:174.0px;top:62.0px;width:10.5px;height:10.8px;background:#b02aa8;"></i><i style="left:163.0px;top:74.3px;width:21.5px;height:21.7px;background:#109fa0;"></i><i style="left:169.5px;top:80.9px;width:8.5px;height:6.5px;background:rgba(255,255,255,.85)"></i><i style="left:187.0px;top:25.6px;width:6.0px;height:70.4px;background:#e8c000;"></i><i style="left:27.0px;top:56.0px;width:18.0px;height:36.0px;background:#5a6a80;"></i><i style="left:42.0px;top:58.0px;width:18.0px;height:32.0px;background:#3a8ac0;"></i><b style="left:17px;top:6px;font-size:10.5px;color:#fff;transform:scaleX(.78);transform-origin:0 0">Start</b><i style="left:175.0px;top:9.0px;width:11.0px;height:5.0px;background:rgba(255,255,255,.8);"></i></div><div class="lb"><span style="position:relative;left:-0.5px">Amy</span></div></div>
<div class="card" style="left:623px;top:68px"><div class="im" style="top:16px;height:128px;background:linear-gradient(180deg,#101012 0%,#18181a 60%,#141412 100%)"><svg style="position:absolute;left:0;top:0" width="193" height="128" viewBox="0 0 193 128"><path d="M82 0L126 0L118 86L96 86Z" fill="url(#mw)" opacity=".55"/><path d="M96 0L114 0L111 76L102 76Z" fill="url(#mw)" opacity=".7"/><ellipse cx="106" cy="86" rx="36" ry="11" fill="url(#glow)"/><rect x="0" y="87" width="193" height="41" fill="#0e0e0c"/><path d="M0 89Q40 84 80 87L84 74L86 87L90 76L92 87Q140 85 193 88V92H0Z" fill="#0c0c0a"/></svg><svg style="position:absolute;left:0;top:0" width="193" height="128" viewBox="0 0 193 128"><defs><linearGradient id="tent" x1="0" x2="1" y1="0" y2="1"><stop offset="0" stop-color="#b8f060"/><stop offset="1" stop-color="#3a8a18"/></linearGradient></defs><path d="M111 119Q113 106 119 99Q123 96 127 98Q134 104 141 117L139 120H112Z" fill="url(#tent)"/></svg><i style="left:0.0px;top:71.0px;width:75.0px;height:53.0px;background:rgba(28,28,28,.9);"></i><i style="left:32.0px;top:77.0px;width:13.0px;height:12.5px;background:#7a7a7a;"></i><i style="left:35.9px;top:79.9px;width:5.2px;height:4.8px;background:rgba(255,255,255,.85)"></i><i style="left:32.0px;top:91.5px;width:13.0px;height:12.5px;background:#1a2a70;"></i><i style="left:35.9px;top:94.4px;width:5.2px;height:4.8px;background:rgba(255,255,255,.85)"></i><i style="left:32.0px;top:105.6px;width:13.0px;height:18.0px;background:#606878;"></i><i style="left:35.9px;top:110.3px;width:5.2px;height:6.5px;background:rgba(255,255,255,.85)"></i><i style="left:46.4px;top:77.0px;width:27.4px;height:27.0px;background:#1e7ad8;"></i><i style="left:55.8px;top:86.2px;width:8.5px;height:6.5px;background:rgba(255,255,255,.85)"></i><i style="left:46.4px;top:105.6px;width:27.4px;height:18.4px;background:#8040a0;"></i><i style="left:55.8px;top:110.5px;width:8.5px;height:6.5px;background:rgba(255,255,255,.85)"></i><i style="left:3.0px;top:77.0px;width:7.0px;height:5.0px;background:#ddd;"></i><i style="left:3.0px;top:2.0px;width:6.0px;height:6.0px;background:#ccc;"></i><i style="left:0.0px;top:123.0px;width:193.0px;height:5.0px;background:#0d0d0d;"></i></div><div class="lb"><span style="position:relative;left:4.75px">Andy E</span></div></div>
<div class="card" style="left:825px;top:68px"><div class="im" style="top:16px;height:126px;background:linear-gradient(160deg,rgba(0,0,0,0) 30%,rgba(60,150,230,.35) 55%,rgba(0,0,0,0) 75%),linear-gradient(100deg,#081a40 0%,#0a2a62 40%,#0c4a9e 65%,#0a3c88 85%,#082c68 100%)"><svg style="position:absolute;left:0;top:0" width="193" height="128" viewBox="0 0 193 128"><ellipse cx="156.0" cy="63.5" rx="40.0" ry="38.0" fill="url(#hglow)"/><polygon points="136.0,43.0 148.0,41.7 148.0,59.0 136.0,60.0" fill="url(#pane)"/><polygon points="150.0,41.5 174.5,38.5 174.5,58.5 150.0,59.0" fill="url(#pane)"/><polygon points="136.0,62.0 148.0,61.5 148.0,83.0 136.0,80.0" fill="url(#pane)"/><polygon points="150.0,61.5 174.5,61.5 174.5,88.5 150.0,83.5" fill="url(#pane)"/></svg><i style="left:0.0px;top:30.8px;width:133.0px;height:88.2px;background:rgba(26,26,26,.97);"></i><i style="left:36.0px;top:41.0px;width:15.0px;height:17.0px;background:#1e78d0;"></i><i style="left:40.5px;top:45.3px;width:6.0px;height:6.5px;background:rgba(255,255,255,.85)"></i><i style="left:52.0px;top:41.0px;width:30.6px;height:17.0px;background:#1e78d0;"></i><i style="left:63.0px;top:45.3px;width:8.5px;height:6.5px;background:rgba(255,255,255,.85)"></i><i style="left:36.0px;top:59.7px;width:30.7px;height:17.3px;background:#1e78d0;"></i><i style="left:47.1px;top:64.1px;width:8.5px;height:6.5px;background:rgba(255,255,255,.85)"></i><i style="left:68.0px;top:59.7px;width:14.6px;height:17.3px;background:#1e78d0;"></i><i style="left:72.4px;top:64.1px;width:5.8px;height:6.5px;background:rgba(255,255,255,.85)"></i><i style="left:36.0px;top:78.0px;width:15.0px;height:17.0px;background:#505050;"></i><i style="left:40.5px;top:82.3px;width:6.0px;height:6.5px;background:rgba(255,255,255,.85)"></i><i style="left:52.6px;top:78.0px;width:30.0px;height:35.0px;background:#8040a0;"></i><i style="left:63.3px;top:91.2px;width:8.5px;height:6.5px;background:rgba(255,255,255,.85)"></i><i style="left:36.0px;top:96.0px;width:15.0px;height:17.0px;background:#1e78d0;"></i><i style="left:40.5px;top:100.3px;width:6.0px;height:6.5px;background:rgba(255,255,255,.85)"></i><i style="left:85.0px;top:41.0px;width:30.0px;height:36.0px;background:#107c10;"></i><i style="left:95.8px;top:54.8px;width:8.5px;height:6.5px;background:rgba(255,255,255,.85)"></i><i style="left:116.7px;top:41.0px;width:15.3px;height:17.0px;background:#1e78d0;"></i><i style="left:121.3px;top:45.3px;width:6.1px;height:6.5px;background:rgba(255,255,255,.85)"></i><i style="left:116.7px;top:59.7px;width:15.3px;height:17.3px;background:#1e78d0;"></i><i style="left:121.3px;top:64.1px;width:6.1px;height:6.5px;background:rgba(255,255,255,.85)"></i><i style="left:85.0px;top:78.0px;width:15.0px;height:17.0px;background:#303030;"></i><i style="left:89.5px;top:82.3px;width:6.0px;height:6.5px;background:rgba(255,255,255,.85)"></i><i style="left:100.8px;top:78.0px;width:31.2px;height:17.0px;background:#e03030;"></i><i style="left:112.2px;top:82.3px;width:8.5px;height:6.5px;background:rgba(255,255,255,.85)"></i><i style="left:85.0px;top:96.0px;width:30.0px;height:17.0px;background:#1e78d0;"></i><i style="left:95.8px;top:100.3px;width:8.5px;height:6.5px;background:rgba(255,255,255,.85)"></i><i style="left:116.7px;top:96.0px;width:15.3px;height:17.0px;background:#1a2a70;"></i><i style="left:121.3px;top:100.3px;width:6.1px;height:6.5px;background:rgba(255,255,255,.85)"></i><i style="left:4.0px;top:44.0px;width:5.0px;height:4.0px;background:#3a8ad8;"></i><i style="left:11.0px;top:45.5px;width:19.0px;height:1.5px;background:rgba(255,255,255,.45);"></i><i style="left:4.0px;top:51.5px;width:5.0px;height:4.0px;background:#3a8ad8;"></i><i style="left:11.0px;top:53.0px;width:19.0px;height:1.5px;background:rgba(255,255,255,.45);"></i><i style="left:4.0px;top:59.0px;width:5.0px;height:4.0px;background:#3a8ad8;"></i><i style="left:11.0px;top:60.5px;width:19.0px;height:1.5px;background:rgba(255,255,255,.45);"></i><i style="left:4.0px;top:66.5px;width:5.0px;height:4.0px;background:#3a8ad8;"></i><i style="left:11.0px;top:68.0px;width:19.0px;height:1.5px;background:rgba(255,255,255,.45);"></i><i style="left:4.0px;top:74.0px;width:5.0px;height:4.0px;background:#3a8ad8;"></i><i style="left:11.0px;top:75.5px;width:19.0px;height:1.5px;background:rgba(255,255,255,.45);"></i><i style="left:4.0px;top:81.5px;width:5.0px;height:4.0px;background:#3a8ad8;"></i><i style="left:11.0px;top:83.0px;width:19.0px;height:1.5px;background:rgba(255,255,255,.45);"></i><i style="left:4.0px;top:89.0px;width:5.0px;height:4.0px;background:#aaa;"></i><i style="left:11.0px;top:90.5px;width:19.0px;height:1.5px;background:rgba(255,255,255,.45);"></i><i style="left:4.0px;top:96.5px;width:5.0px;height:4.0px;background:#aaa;"></i><i style="left:11.0px;top:98.0px;width:19.0px;height:1.5px;background:rgba(255,255,255,.45);"></i><i style="left:4.0px;top:104.0px;width:5.0px;height:4.0px;background:#aaa;"></i><i style="left:11.0px;top:105.5px;width:19.0px;height:1.5px;background:rgba(255,255,255,.45);"></i><i style="left:0.0px;top:119.0px;width:193.0px;height:7.0px;background:#0d0d0d;"></i><i style="left:7.7px;top:119.5px;width:51.3px;height:6.0px;background:#e8e8e8;"></i></div><div class="lb"><span style="position:relative;left:-4px">Andy N</span></div></div>
<div class="card" style="left:1027px;top:68px"><div class="im" style="top:16.5px;height:120px;background:#21096c"><i style="left:18.2px;top:27.4px;width:36.8px;height:17.2px;background:#1d9fa9;"></i><i style="left:32.4px;top:31.8px;width:8.5px;height:6.5px;background:rgba(255,255,255,.85)"></i><i style="left:56.6px;top:27.4px;width:37.2px;height:17.2px;background:#2e8ae0;"></i><i style="left:71.0px;top:31.8px;width:8.5px;height:6.5px;background:rgba(255,255,255,.85)"></i><i style="left:95.6px;top:27.4px;width:37.2px;height:17.2px;background:#1d9fa9;"></i><i style="left:110.0px;top:31.8px;width:8.5px;height:6.5px;background:rgba(255,255,255,.85)"></i><i style="left:141.0px;top:27.4px;width:37.0px;height:17.2px;background:linear-gradient(180deg,#b8a040,#7a7a30 50%,#c0a848);"></i><i style="left:18.2px;top:46.6px;width:36.8px;height:17.2px;background:#6c41c0;"></i><i style="left:32.4px;top:51.0px;width:8.5px;height:6.5px;background:rgba(255,255,255,.85)"></i><i style="left:56.6px;top:46.6px;width:37.2px;height:17.2px;background:linear-gradient(180deg,#2a2a3a,#c8c8d8 45%,#5a5a6a 60%,#3a3a48);"></i><i style="left:95.6px;top:46.6px;width:37.2px;height:17.2px;background:#15a13d;"></i><i style="left:110.0px;top:51.0px;width:8.5px;height:6.5px;background:rgba(255,255,255,.85)"></i><i style="left:141.0px;top:46.6px;width:37.0px;height:17.2px;background:#1d9fa9;"></i><i style="left:155.2px;top:51.0px;width:8.5px;height:6.5px;background:rgba(255,255,255,.85)"></i><i style="left:18.2px;top:65.6px;width:36.8px;height:17.2px;background:#e3591f;"></i><i style="left:32.4px;top:69.9px;width:8.5px;height:6.5px;background:rgba(255,255,255,.85)"></i><i style="left:56.6px;top:65.6px;width:18.4px;height:17.2px;background:#2a7fdc;"></i><i style="left:62.1px;top:69.9px;width:7.4px;height:6.5px;background:rgba(255,255,255,.85)"></i><i style="left:75.5px;top:65.6px;width:18.3px;height:17.2px;background:#15a13d;"></i><i style="left:81.0px;top:69.9px;width:7.3px;height:6.5px;background:rgba(255,255,255,.85)"></i><i style="left:95.6px;top:65.6px;width:37.2px;height:17.2px;background:#6c41c0;"></i><i style="left:110.0px;top:69.9px;width:8.5px;height:6.5px;background:rgba(255,255,255,.85)"></i><i style="left:141.0px;top:65.6px;width:18.0px;height:17.2px;background:#15a13d;"></i><i style="left:146.4px;top:69.9px;width:7.2px;height:6.5px;background:rgba(255,255,255,.85)"></i><i style="left:159.5px;top:65.6px;width:18.5px;height:17.2px;background:#b12da6;"></i><i style="left:165.1px;top:69.9px;width:7.4px;height:6.5px;background:rgba(255,255,255,.85)"></i><i style="left:18.2px;top:85.0px;width:36.8px;height:18.0px;background:#a52bbb;"></i><i style="left:32.4px;top:89.8px;width:8.5px;height:6.5px;background:rgba(255,255,255,.85)"></i><i style="left:56.6px;top:85.0px;width:18.4px;height:18.0px;background:#9b30b6;"></i><i style="left:62.1px;top:89.8px;width:7.4px;height:6.5px;background:rgba(255,255,255,.85)"></i><i style="left:75.5px;top:85.0px;width:18.3px;height:18.0px;background:#2a7fdc;"></i><i style="left:81.0px;top:89.8px;width:7.3px;height:6.5px;background:rgba(255,255,255,.85)"></i><i style="left:95.6px;top:85.0px;width:37.2px;height:18.0px;background:#c9223d;"></i><i style="left:110.0px;top:89.8px;width:8.5px;height:6.5px;background:rgba(255,255,255,.85)"></i><i style="left:141.0px;top:85.0px;width:18.0px;height:18.0px;background:#e2521f;"></i><i style="left:146.4px;top:89.8px;width:7.2px;height:6.5px;background:rgba(255,255,255,.85)"></i><i style="left:159.5px;top:85.0px;width:18.5px;height:18.0px;background:#c9223d;"></i><i style="left:165.1px;top:89.8px;width:7.4px;height:6.5px;background:rgba(255,255,255,.85)"></i><b style="left:17px;top:6px;font-size:10.5px;color:#fff;transform:scaleX(.78);transform-origin:0 0">Start</b><i style="left:152.0px;top:9.0px;width:24.0px;height:3.0px;background:rgba(255,255,255,.55);"></i><i style="left:178.0px;top:8.0px;width:5.0px;height:6.0px;background:#fff;"></i></div><div class="lb"><span style="position:relative;left:0px">Anna</span></div></div>
<div class="card" style="left:17px;top:252px"><div class="im" style="top:16.5px;height:120px;background:#4d0b1e"><svg style="position:absolute;left:0;top:0" width="193" height="120" viewBox="0 0 193 120"><circle cx="47.5" cy="109.8" r="1.7" fill="#c05080" opacity=".75"/><circle cx="91.6" cy="110.5" r="2.1" fill="#f0d0e0" opacity=".75"/><circle cx="51.5" cy="104.2" r="2.8" fill="#f0d0e0" opacity=".75"/><circle cx="104.2" cy="109.9" r="1.7" fill="#a0c060" opacity=".75"/><circle cx="46.4" cy="102.7" r="2.7" fill="#f0d0e0" opacity=".75"/><circle cx="141.6" cy="112.1" r="1.1" fill="#c05080" opacity=".75"/><circle cx="11.0" cy="114.0" r="2.5" fill="#e0a0c0" opacity=".75"/><circle cx="91.4" cy="112.9" r="2.6" fill="#f0d0e0" opacity=".75"/><circle cx="76.9" cy="114.4" r="1.8" fill="#a0c060" opacity=".75"/><circle cx="167.3" cy="101.8" r="1.2" fill="#a0c060" opacity=".75"/><circle cx="51.2" cy="112.1" r="2.4" fill="#e0a0c0" opacity=".75"/><circle cx="81.8" cy="115.0" r="2.0" fill="#c05080" opacity=".75"/><circle cx="112.4" cy="110.5" r="2.6" fill="#d070a0" opacity=".75"/><circle cx="163.1" cy="117.8" r="2.2" fill="#a0c060" opacity=".75"/><circle cx="133.6" cy="105.9" r="2.0" fill="#c05080" opacity=".75"/><circle cx="109.4" cy="112.8" r="1.4" fill="#c05080" opacity=".75"/><circle cx="52.9" cy="102.2" r="1.9" fill="#f0d0e0" opacity=".75"/><circle cx="19.6" cy="114.4" r="1.7" fill="#a0c060" opacity=".75"/><circle cx="6.8" cy="107.7" r="1.7" fill="#d070a0" opacity=".75"/><circle cx="11.3" cy="111.1" r="1.1" fill="#c05080" opacity=".75"/><circle cx="64.9" cy="115.9" r="2.8" fill="#c05080" opacity=".75"/><circle cx="47.1" cy="100.6" r="1.0" fill="#d070a0" opacity=".75"/></svg><i style="left:0;top:0;width:193px;height:120px;background:radial-gradient(circle 8px at 85% 10%,rgba(230,150,170,.35),rgba(0,0,0,0)),radial-gradient(circle 6px at 70% 14%,rgba(230,150,170,.3),rgba(0,0,0,0)),linear-gradient(180deg,rgba(0,0,0,0) 80%,rgba(120,60,80,.5) 100%)"></i><i style="left:18.2px;top:27.4px;width:36.8px;height:17.2px;background:#1d9fa9;"></i><i style="left:32.4px;top:31.8px;width:8.5px;height:6.5px;background:rgba(255,255,255,.85)"></i><i style="left:56.6px;top:27.4px;width:37.2px;height:17.2px;background:#2e8ae0;"></i><i style="left:71.0px;top:31.8px;width:8.5px;height:6.5px;background:rgba(255,255,255,.85)"></i><i style="left:95.6px;top:27.4px;width:37.2px;height:17.2px;background:#1d9fa9;"></i><i style="left:110.0px;top:31.8px;width:8.5px;height:6.5px;background:rgba(255,255,255,.85)"></i><i style="left:141.0px;top:27.4px;width:37.0px;height:17.2px;background:linear-gradient(180deg,#b8a040,#8a7a30 50%,#c0a848);"></i><i style="left:18.2px;top:46.6px;width:36.8px;height:17.2px;background:#6c41c0;"></i><i style="left:32.4px;top:51.0px;width:8.5px;height:6.5px;background:rgba(255,255,255,.85)"></i><i style="left:56.6px;top:46.6px;width:37.2px;height:17.2px;background:linear-gradient(160deg,#c8d8e8,#8aa8c8 40%,#2a4a78 55%,#a8c0d8 80%);"></i><i style="left:95.6px;top:46.6px;width:37.2px;height:17.2px;background:#15a13d;"></i><i style="left:110.0px;top:51.0px;width:8.5px;height:6.5px;background:rgba(255,255,255,.85)"></i><i style="left:141.0px;top:46.6px;width:37.0px;height:17.2px;background:#1d9fa9;"></i><i style="left:155.2px;top:51.0px;width:8.5px;height:6.5px;background:rgba(255,255,255,.85)"></i><i style="left:18.2px;top:65.6px;width:36.8px;height:17.2px;background:#e3591f;"></i><i style="left:32.4px;top:69.9px;width:8.5px;height:6.5px;background:rgba(255,255,255,.85)"></i><i style="left:56.6px;top:65.6px;width:18.4px;height:17.2px;background:#2a7fdc;"></i><i style="left:62.1px;top:69.9px;width:7.4px;height:6.5px;background:rgba(255,255,255,.85)"></i><i style="left:75.5px;top:65.6px;width:18.3px;height:17.2px;background:#15a13d;"></i><i style="left:81.0px;top:69.9px;width:7.3px;height:6.5px;background:rgba(255,255,255,.85)"></i><i style="left:95.6px;top:65.6px;width:37.2px;height:17.2px;background:#6c41c0;"></i><i style="left:110.0px;top:69.9px;width:8.5px;height:6.5px;background:rgba(255,255,255,.85)"></i><i style="left:141.0px;top:65.6px;width:18.0px;height:17.2px;background:#15a13d;"></i><i style="left:146.4px;top:69.9px;width:7.2px;height:6.5px;background:rgba(255,255,255,.85)"></i><i style="left:159.5px;top:65.6px;width:18.5px;height:17.2px;background:#b12da6;"></i><i style="left:165.1px;top:69.9px;width:7.4px;height:6.5px;background:rgba(255,255,255,.85)"></i><i style="left:18.2px;top:85.0px;width:36.8px;height:18.0px;background:#a52bbb;"></i><i style="left:32.4px;top:89.8px;width:8.5px;height:6.5px;background:rgba(255,255,255,.85)"></i><i style="left:56.6px;top:85.0px;width:18.4px;height:18.0px;background:#9b30b6;"></i><i style="left:62.1px;top:89.8px;width:7.4px;height:6.5px;background:rgba(255,255,255,.85)"></i><i style="left:75.5px;top:85.0px;width:18.3px;height:18.0px;background:#2a7fdc;"></i><i style="left:81.0px;top:89.8px;width:7.3px;height:6.5px;background:rgba(255,255,255,.85)"></i><i style="left:95.6px;top:85.0px;width:37.2px;height:18.0px;background:#c9223d;"></i><i style="left:110.0px;top:89.8px;width:8.5px;height:6.5px;background:rgba(255,255,255,.85)"></i><i style="left:141.0px;top:85.0px;width:18.0px;height:18.0px;background:#e2521f;"></i><i style="left:146.4px;top:89.8px;width:7.2px;height:6.5px;background:rgba(255,255,255,.85)"></i><i style="left:159.5px;top:85.0px;width:18.5px;height:18.0px;background:#c9223d;"></i><i style="left:165.1px;top:89.8px;width:7.4px;height:6.5px;background:rgba(255,255,255,.85)"></i><b style="left:17px;top:6px;font-size:10.5px;color:#fff;transform:scaleX(.78);transform-origin:0 0">Start</b><i style="left:152.0px;top:9.0px;width:24.0px;height:3.0px;background:rgba(255,255,255,.55);"></i><i style="left:178.0px;top:8.0px;width:5.0px;height:6.0px;background:#fff;"></i></div><div class="lb"><span style="position:relative;left:-7.2px">Christine</span></div></div>
<div class="card" style="left:219px;top:252px"><div class="im" style="top:16px;height:129px;background:linear-gradient(180deg,#101012 0%,#18181a 60%,#141412 100%)"><svg style="position:absolute;left:0;top:0" width="193" height="129" viewBox="0 0 193 129"><path d="M86 0L130 0L122 84L100 84Z" fill="url(#mw)" opacity=".55"/><path d="M100 0L118 0L115 74L106 74Z" fill="url(#mw)" opacity=".7"/><ellipse cx="128" cy="84" rx="36" ry="11" fill="url(#glow)"/><rect x="0" y="85" width="193" height="44" fill="#0e0e0c"/><path d="M0 87Q40 82 80 85L84 72L86 85L90 74L92 85Q140 83 193 86V90H0Z" fill="#0c0c0a"/></svg><i style="left:33.0px;top:20.5px;width:13.0px;height:13.5px;background:#9886d6;"></i><i style="left:36.9px;top:23.7px;width:5.2px;height:5.1px;background:rgba(255,255,255,.85)"></i><i style="left:46.7px;top:20.5px;width:27.6px;height:27.3px;background:#1e78d0;"></i><i style="left:56.2px;top:29.9px;width:8.5px;height:6.5px;background:rgba(255,255,255,.85)"></i><i style="left:75.6px;top:20.5px;width:27.4px;height:27.3px;background:#107c10;"></i><i style="left:85.0px;top:29.9px;width:8.5px;height:6.5px;background:rgba(255,255,255,.85)"></i><i style="left:104.5px;top:20.5px;width:13.1px;height:13.5px;background:#10a0e0;"></i><i style="left:108.4px;top:23.7px;width:5.2px;height:5.1px;background:rgba(255,255,255,.85)"></i><i style="left:104.5px;top:34.5px;width:13.1px;height:13.3px;background:#6030a0;"></i><i style="left:108.4px;top:37.6px;width:5.2px;height:5.1px;background:rgba(255,255,255,.85)"></i><i style="left:119.7px;top:20.5px;width:26.8px;height:13.5px;background:#9886d6;"></i><i style="left:128.8px;top:23.7px;width:8.5px;height:5.1px;background:rgba(255,255,255,.85)"></i><i style="left:119.7px;top:34.5px;width:26.8px;height:13.3px;background:#9886d6;"></i><i style="left:128.8px;top:37.6px;width:8.5px;height:5.1px;background:rgba(255,255,255,.85)"></i><i style="left:147.8px;top:20.5px;width:13.2px;height:13.5px;background:#e0e0e0;"></i><i style="left:151.8px;top:23.7px;width:5.3px;height:5.1px;background:rgba(255,255,255,.85)"></i><i style="left:147.8px;top:34.5px;width:13.2px;height:13.3px;background:#e05020;"></i><i style="left:151.8px;top:37.6px;width:5.3px;height:5.1px;background:rgba(255,255,255,.85)"></i><i style="left:33.0px;top:34.5px;width:13.0px;height:13.3px;background:#1a2a70;"></i><i style="left:36.9px;top:37.6px;width:5.2px;height:5.1px;background:rgba(255,255,255,.85)"></i><i style="left:33.0px;top:48.6px;width:13.0px;height:13.4px;background:#505878;"></i><i style="left:36.9px;top:51.8px;width:5.2px;height:5.1px;background:rgba(255,255,255,.85)"></i><i style="left:46.7px;top:48.6px;width:27.6px;height:27.4px;background:#8040a0;"></i><i style="left:56.2px;top:58.0px;width:8.5px;height:6.5px;background:rgba(255,255,255,.85)"></i><i style="left:75.6px;top:48.6px;width:27.4px;height:27.4px;background:#1a60a8;"></i><i style="left:85.0px;top:58.0px;width:8.5px;height:6.5px;background:rgba(255,255,255,.85)"></i><i style="left:33.0px;top:62.5px;width:13.0px;height:13.5px;background:#9886d6;"></i><i style="left:36.9px;top:65.7px;width:5.2px;height:5.1px;background:rgba(255,255,255,.85)"></i><i style="left:33.0px;top:77.0px;width:13.0px;height:13.0px;background:#9886d6;"></i><i style="left:36.9px;top:80.0px;width:5.2px;height:4.9px;background:rgba(255,255,255,.85)"></i><i style="left:46.7px;top:77.0px;width:27.6px;height:13.0px;background:#108898;"></i><i style="left:56.2px;top:80.0px;width:8.5px;height:4.9px;background:rgba(255,255,255,.85)"></i><i style="left:75.6px;top:77.0px;width:27.4px;height:13.0px;background:#1e78d0;"></i><i style="left:85.0px;top:80.0px;width:8.5px;height:4.9px;background:rgba(255,255,255,.85)"></i><i style="left:119.7px;top:48.6px;width:26.8px;height:13.4px;background:#a08870;"></i><i style="left:128.8px;top:51.8px;width:8.5px;height:5.1px;background:rgba(255,255,255,.85)"></i><i style="left:104.5px;top:62.5px;width:13.1px;height:13.5px;background:#8a78c8;"></i><i style="left:108.4px;top:65.7px;width:5.2px;height:5.1px;background:rgba(255,255,255,.85)"></i><i style="left:124.0px;top:70.0px;width:9.0px;height:12.0px;background:#40a0d8;"></i><i style="left:134.0px;top:70.0px;width:12.0px;height:12.0px;background:#30a070;"></i><i style="left:60.5px;top:91.0px;width:13.8px;height:13.0px;background:#9886d6;"></i><i style="left:64.6px;top:94.0px;width:5.5px;height:4.9px;background:rgba(255,255,255,.85)"></i><i style="left:75.6px;top:91.0px;width:13.4px;height:13.0px;background:#9886d6;"></i><i style="left:79.6px;top:94.0px;width:5.4px;height:4.9px;background:rgba(255,255,255,.85)"></i><i style="left:33.0px;top:104.5px;width:41.3px;height:13.5px;background:#9886d6;"></i><i style="left:49.4px;top:107.7px;width:8.5px;height:5.1px;background:rgba(255,255,255,.85)"></i><i style="left:75.6px;top:104.5px;width:13.4px;height:13.5px;background:#9886d6;"></i><i style="left:79.6px;top:107.7px;width:5.4px;height:5.1px;background:rgba(255,255,255,.85)"></i><i style="left:103.0px;top:91.0px;width:43.0px;height:27.0px;background:linear-gradient(90deg,#5a4a30,#2a3a20 50%,#4a5a40);"></i><i style="left:80.0px;top:52.0px;width:18.0px;height:20.0px;background:rgba(250,250,250,.85);"></i><i style="left:3.0px;top:2.0px;width:7.0px;height:6.0px;background:#ccc;"></i><i style="left:0.0px;top:123.0px;width:193.0px;height:6.0px;background:#0d0d0d;"></i><i style="left:1.0px;top:123.5px;width:51.0px;height:5.0px;background:#e8e8e8;"></i></div><div class="lb"><span style="position:relative;left:-1.5px">Colette</span></div></div>
<div class="card" style="left:421px;top:252px"><div class="im" style="top:16px;height:128px;background:linear-gradient(180deg,#1a5cb4 0%,#2f78c8 20.0%,#5e98d4 41.8%,#9cbcdc 54.5%,#bcd0e0 60.3%,#86aed0 61.1%,#a4c2da 67.6%,#80a8cc 80.1%,#4a80bc 100%)"><svg style="position:absolute;left:0;top:0" width="193" height="128" viewBox="0 0 193 128"><ellipse cx="115" cy="18" rx="42" ry="13" fill="url(#cld)"/><ellipse cx="150" cy="32" rx="28" ry="9" fill="url(#cld)"/><ellipse cx="95" cy="45" rx="22" ry="6" fill="url(#cld)"/><ellipse cx="165" cy="8" rx="22" ry="6" fill="url(#cld)"/><ellipse cx="22" cy="30" rx="16" ry="5" fill="url(#cld)"/><g transform="translate(0,0)"><rect x="-12" y="77.5" width="217" height="4" fill="#d8e4ec" opacity=".55"/><path d="M88 78Q89 92 93 100Q100 98 106 90Q111 84 115 78Z" fill="url(#rfl)"/><path d="M119.5 78Q122 95 130 108Q138 112 146 104Q154 92 162 78Z" fill="url(#rfl)"/><path d="M88 77.5Q88.5 66 90 60Q92 56.5 96 57Q101 57.5 104 61Q109 67 115 77.5Z" fill="url(#rkB)"/><path d="M119.5 77.5L120.5 70Q122 60 126 52Q131 45 138 43L143 42.5Q146 46 148 52Q153 62 158 70L162 77.5H134Q133 71 130 71Q127 71 126 77.5Z" fill="url(#rkA)"/></g></svg><i style="left:0.0px;top:12.3px;width:75.0px;height:110.2px;background:rgba(38,38,38,.97);"></i><i style="left:31.5px;top:20.0px;width:13.5px;height:13.0px;background:#e0162a;"></i><i style="left:35.5px;top:23.0px;width:5.4px;height:4.9px;background:rgba(255,255,255,.85)"></i><i style="left:45.6px;top:20.0px;width:26.9px;height:27.0px;background:#1e78d0;"></i><i style="left:54.8px;top:29.2px;width:8.5px;height:6.5px;background:rgba(255,255,255,.85)"></i><i style="left:31.5px;top:34.0px;width:13.5px;height:13.0px;background:#1a2470;"></i><i style="left:35.5px;top:37.0px;width:5.4px;height:4.9px;background:rgba(255,255,255,.85)"></i><i style="left:31.5px;top:47.7px;width:13.5px;height:13.3px;background:#5a6070;"></i><i style="left:35.5px;top:50.8px;width:5.4px;height:5.1px;background:rgba(255,255,255,.85)"></i><i style="left:45.6px;top:47.7px;width:26.9px;height:26.6px;background:#8040a0;"></i><i style="left:54.8px;top:56.8px;width:8.5px;height:6.5px;background:rgba(255,255,255,.85)"></i><i style="left:31.5px;top:61.5px;width:13.5px;height:12.8px;background:#e0162a;"></i><i style="left:35.5px;top:64.5px;width:5.4px;height:4.9px;background:rgba(255,255,255,.85)"></i><i style="left:31.5px;top:75.5px;width:13.5px;height:13.5px;background:#e0162a;"></i><i style="left:35.5px;top:78.7px;width:5.4px;height:5.1px;background:rgba(255,255,255,.85)"></i><i style="left:45.6px;top:75.5px;width:26.9px;height:13.5px;background:linear-gradient(90deg,#8a7a60,#c8b8a0);"></i><i style="left:58.5px;top:90.0px;width:14.0px;height:12.8px;background:#e0162a;"></i><i style="left:62.7px;top:93.0px;width:5.6px;height:4.9px;background:rgba(255,255,255,.85)"></i><i style="left:31.5px;top:103.8px;width:41.0px;height:13.6px;background:#e0162a;"></i><i style="left:47.8px;top:107.0px;width:8.5px;height:5.2px;background:rgba(255,255,255,.85)"></i><i style="left:3.0px;top:44.0px;width:4.0px;height:3.5px;background:#e0162a;"></i><i style="left:9.0px;top:45.0px;width:18.0px;height:1.3px;background:rgba(255,255,255,.4);"></i><i style="left:3.0px;top:50.0px;width:4.0px;height:3.5px;background:#e0162a;"></i><i style="left:9.0px;top:51.0px;width:18.0px;height:1.3px;background:rgba(255,255,255,.4);"></i><i style="left:3.0px;top:56.0px;width:4.0px;height:3.5px;background:#e0162a;"></i><i style="left:9.0px;top:57.0px;width:18.0px;height:1.3px;background:rgba(255,255,255,.4);"></i><i style="left:3.0px;top:62.0px;width:4.0px;height:3.5px;background:#e0162a;"></i><i style="left:9.0px;top:63.0px;width:18.0px;height:1.3px;background:rgba(255,255,255,.4);"></i><i style="left:3.0px;top:68.0px;width:4.0px;height:3.5px;background:#e0162a;"></i><i style="left:9.0px;top:69.0px;width:18.0px;height:1.3px;background:rgba(255,255,255,.4);"></i><i style="left:3.0px;top:74.0px;width:4.0px;height:3.5px;background:#e0162a;"></i><i style="left:9.0px;top:75.0px;width:18.0px;height:1.3px;background:rgba(255,255,255,.4);"></i><i style="left:3.0px;top:80.0px;width:4.0px;height:3.5px;background:#e0162a;"></i><i style="left:9.0px;top:81.0px;width:18.0px;height:1.3px;background:rgba(255,255,255,.4);"></i><i style="left:0.0px;top:122.5px;width:193.0px;height:5.5px;background:#0d0d0d;"></i><i style="left:5.0px;top:123.0px;width:47.0px;height:4.5px;background:#e8e8e8;"></i></div><div class="lb"><span style="position:relative;left:-0.4px">Darren</span></div></div>
<div class="card" style="left:623px;top:252px"><div class="im" style="top:16.5px;height:120px;background:#1a7ae6"><i style="left:0;top:0;width:193px;height:22px;background:linear-gradient(90deg,rgba(60,200,230,.35),rgba(30,160,220,.5) 30%,rgba(60,200,230,.25) 60%,rgba(30,170,230,.45))"></i><i style="left:0;top:100px;width:193px;height:20px;background:linear-gradient(90deg,rgba(40,180,220,.45),rgba(20,120,220,.2) 40%,rgba(40,190,220,.5) 80%)"></i><i style="left:18.0px;top:25.6px;width:46.0px;height:22.1px;background:#3a84d8;"></i><i style="left:36.8px;top:32.4px;width:8.5px;height:6.5px;background:rgba(255,255,255,.85)"></i><i style="left:66.0px;top:25.6px;width:46.0px;height:22.1px;background:#12a024;"></i><i style="left:84.8px;top:32.4px;width:8.5px;height:6.5px;background:rgba(255,255,255,.85)"></i><i style="left:114.0px;top:25.6px;width:22.6px;height:22.1px;background:#1664c8;"></i><i style="left:121.0px;top:32.4px;width:8.5px;height:6.5px;background:rgba(255,255,255,.85)"></i><i style="left:138.4px;top:25.6px;width:22.0px;height:22.1px;background:#8040a0;"></i><i style="left:145.2px;top:32.4px;width:8.5px;height:6.5px;background:rgba(255,255,255,.85)"></i><i style="left:162.0px;top:25.6px;width:31.0px;height:22.1px;background:#d8a8b0;"></i><i style="left:18.0px;top:49.5px;width:46.0px;height:23.0px;background:#2a7ad0;"></i><i style="left:36.8px;top:56.8px;width:8.5px;height:6.5px;background:rgba(255,255,255,.85)"></i><i style="left:66.0px;top:49.5px;width:22.0px;height:23.0px;background:#c02040;"></i><i style="left:72.8px;top:56.8px;width:8.5px;height:6.5px;background:rgba(255,255,255,.85)"></i><i style="left:89.7px;top:49.5px;width:22.3px;height:23.0px;background:#a424b2;"></i><i style="left:96.6px;top:56.8px;width:8.5px;height:6.5px;background:rgba(255,255,255,.85)"></i><i style="left:114.0px;top:49.5px;width:10.5px;height:11.0px;background:#d02030;"></i><i style="left:125.5px;top:49.5px;width:11.1px;height:11.0px;background:#e06020;"></i><i style="left:114.0px;top:61.5px;width:10.5px;height:11.0px;background:#13a03a;"></i><i style="left:125.5px;top:61.5px;width:11.1px;height:11.0px;background:#b02aa8;"></i><i style="left:138.4px;top:49.5px;width:22.0px;height:23.0px;background:#1e70d0;"></i><i style="left:145.2px;top:56.8px;width:8.5px;height:6.5px;background:rgba(255,255,255,.85)"></i><i style="left:162.0px;top:49.5px;width:31.0px;height:46.9px;background:#2a86e2;"></i><i style="left:173.2px;top:68.7px;width:8.5px;height:6.5px;background:rgba(255,255,255,.85)"></i><i style="left:18.0px;top:73.8px;width:46.0px;height:22.6px;background:#6a40b8;"></i><i style="left:36.8px;top:80.8px;width:8.5px;height:6.5px;background:rgba(255,255,255,.85)"></i><i style="left:66.0px;top:73.8px;width:22.0px;height:22.6px;background:#1aa9e8;"></i><i style="left:72.8px;top:80.8px;width:8.5px;height:6.5px;background:rgba(255,255,255,.85)"></i><i style="left:89.7px;top:73.8px;width:22.3px;height:22.6px;background:#e2561f;"></i><i style="left:96.6px;top:80.8px;width:8.5px;height:6.5px;background:rgba(255,255,255,.85)"></i><i style="left:114.0px;top:73.8px;width:22.6px;height:22.6px;background:#e4ecf4;"></i><i style="left:70.0px;top:28.0px;width:10.0px;height:10.0px;background:#1a3a1a;"></i><b style="left:17px;top:6px;font-size:10.5px;color:#fff;transform:scaleX(.78);transform-origin:0 0">Start</b><i style="left:175.0px;top:9.0px;width:8.0px;height:6.0px;background:#fff;"></i></div><div class="lb"><span style="position:relative;left:-0.3px">David</span></div></div>
<div class="card" style="left:825px;top:252px"><div class="im" style="top:16.5px;height:120px;background:#a0106c"><svg style="position:absolute;left:0;top:0" width="193" height="120" viewBox="0 0 193 120"><circle cx="115.2" cy="100.6" r="1.4" fill="#c0e0a0" opacity=".75"/><circle cx="57.5" cy="104.7" r="2.2" fill="#f0a040" opacity=".75"/><circle cx="61.7" cy="117.3" r="2.6" fill="#c0e0a0" opacity=".75"/><circle cx="73.5" cy="115.7" r="1.7" fill="#f0c0e0" opacity=".75"/><circle cx="130.3" cy="101.8" r="2.8" fill="#f0c0e0" opacity=".75"/><circle cx="53.7" cy="111.4" r="2.3" fill="#f0a040" opacity=".75"/><circle cx="84.8" cy="104.6" r="1.5" fill="#f0a040" opacity=".75"/><circle cx="5.1" cy="107.5" r="2.0" fill="#e080c0" opacity=".75"/><circle cx="73.4" cy="110.6" r="1.2" fill="#f0a040" opacity=".75"/><circle cx="90.2" cy="112.2" r="1.6" fill="#f0a040" opacity=".75"/><circle cx="141.0" cy="100.4" r="1.1" fill="#e080c0" opacity=".75"/><circle cx="183.1" cy="104.5" r="1.8" fill="#f0c0e0" opacity=".75"/><circle cx="115.5" cy="103.2" r="1.3" fill="#f0a040" opacity=".75"/><circle cx="160.8" cy="104.8" r="2.4" fill="#e080c0" opacity=".75"/><circle cx="147.4" cy="100.5" r="2.0" fill="#80c0e0" opacity=".75"/><circle cx="61.0" cy="104.0" r="2.4" fill="#80c0e0" opacity=".75"/><circle cx="64.3" cy="112.2" r="2.2" fill="#e080c0" opacity=".75"/><circle cx="22.0" cy="105.8" r="1.6" fill="#80c0e0" opacity=".75"/><circle cx="85.0" cy="115.4" r="1.3" fill="#f0a040" opacity=".75"/><circle cx="141.8" cy="103.9" r="2.0" fill="#f0a040" opacity=".75"/><circle cx="45.1" cy="102.2" r="2.0" fill="#80c0e0" opacity=".75"/><circle cx="61.9" cy="115.1" r="2.0" fill="#f0a040" opacity=".75"/><circle cx="66.6" cy="114.9" r="1.2" fill="#f0c0e0" opacity=".75"/><circle cx="67.6" cy="102.3" r="1.5" fill="#f0a040" opacity=".75"/><circle cx="89.9" cy="111.4" r="1.5" fill="#f0c0e0" opacity=".75"/><circle cx="79.6" cy="116.6" r="1.3" fill="#e080c0" opacity=".75"/></svg><i style="left:0;top:0;width:193px;height:120px;background:radial-gradient(circle 10px at 80% 6%,rgba(240,170,210,.5),rgba(0,0,0,0)),radial-gradient(circle 8px at 65% 14%,rgba(240,170,210,.45),rgba(0,0,0,0)),linear-gradient(180deg,rgba(0,0,0,0) 82%,rgba(160,80,160,.45) 100%)"></i><i style="left:17.4px;top:25.6px;width:46.6px;height:22.1px;background:#2282d8;"></i><i style="left:36.5px;top:32.4px;width:8.5px;height:6.5px;background:rgba(255,255,255,.85)"></i><i style="left:66.0px;top:25.6px;width:22.4px;height:22.1px;background:#c42042;"></i><i style="left:73.0px;top:32.4px;width:8.5px;height:6.5px;background:rgba(255,255,255,.85)"></i><i style="left:90.0px;top:25.6px;width:22.8px;height:22.1px;background:#a424b2;"></i><i style="left:97.2px;top:32.4px;width:8.5px;height:6.5px;background:rgba(255,255,255,.85)"></i><i style="left:114.6px;top:25.6px;width:22.0px;height:22.1px;background:#8040a0;"></i><i style="left:121.3px;top:32.4px;width:8.5px;height:6.5px;background:rgba(255,255,255,.85)"></i><i style="left:138.5px;top:25.6px;width:10.5px;height:10.4px;background:#d02030;"></i><i style="left:150.0px;top:25.6px;width:11.0px;height:10.4px;background:#e06020;"></i><i style="left:138.5px;top:37.0px;width:10.5px;height:10.7px;background:#13a03a;"></i><i style="left:150.0px;top:37.0px;width:11.0px;height:10.7px;background:#b02aa8;"></i><i style="left:162.7px;top:25.6px;width:30.3px;height:46.9px;background:#2282e0;"></i><i style="left:173.6px;top:44.8px;width:8.5px;height:6.5px;background:rgba(255,255,255,.85)"></i><i style="left:17.4px;top:49.5px;width:46.6px;height:23.0px;background:#6a40b8;"></i><i style="left:36.5px;top:56.8px;width:8.5px;height:6.5px;background:rgba(255,255,255,.85)"></i><i style="left:66.0px;top:49.5px;width:22.4px;height:23.0px;background:#1aa9e8;"></i><i style="left:73.0px;top:56.8px;width:8.5px;height:6.5px;background:rgba(255,255,255,.85)"></i><i style="left:90.0px;top:49.5px;width:22.8px;height:23.0px;background:#e2561f;"></i><i style="left:97.2px;top:56.8px;width:8.5px;height:6.5px;background:rgba(255,255,255,.85)"></i><i style="left:114.6px;top:49.5px;width:22.0px;height:23.0px;background:#1e70d0;"></i><i style="left:121.3px;top:56.8px;width:8.5px;height:6.5px;background:rgba(255,255,255,.85)"></i><i style="left:138.5px;top:49.5px;width:22.5px;height:23.0px;background:#e8e8f0;"></i><i style="left:17.4px;top:73.8px;width:46.6px;height:22.6px;background:#12a030;"></i><i style="left:36.5px;top:80.8px;width:8.5px;height:6.5px;background:rgba(255,255,255,.85)"></i><i style="left:66.0px;top:73.8px;width:22.4px;height:22.6px;background:#d4aac8;"></i><i style="left:90.0px;top:73.8px;width:22.8px;height:22.6px;background:#1a62c8;"></i><i style="left:97.2px;top:80.8px;width:8.5px;height:6.5px;background:rgba(255,255,255,.85)"></i><i style="left:114.6px;top:73.8px;width:46.4px;height:22.6px;background:linear-gradient(90deg,#e8e0e0,#c83040 40%,#e8c0b0 70%,#2a1a1a);"></i><i style="left:162.7px;top:73.8px;width:30.3px;height:22.6px;background:linear-gradient(180deg,#5a8a4a,#3a6a3a 70%,#5a40c0 72%);"></i><i style="left:22.0px;top:78.0px;width:10.0px;height:10.0px;background:#1a1a1a;"></i><b style="left:17px;top:6px;font-size:10.5px;color:#fff;transform:scaleX(.78);transform-origin:0 0">Start</b><i style="left:162.0px;top:9.0px;width:9.0px;height:6.0px;background:#fff;"></i></div><div class="lb"><span style="position:relative;left:4.7px">Denise E</span></div></div>
<div class="card" style="left:1027px;top:252px"><div class="im" style="top:16px;height:121px;background:linear-gradient(180deg,#1a5cb4 0%,#2f78c8 20.9%,#5e98d4 43.6%,#9cbcdc 56.9%,#bcd0e0 63.0%,#86aed0 63.8%,#a4c2da 70.7%,#80a8cc 83.9%,#4a80bc 100%)"><svg style="position:absolute;left:0;top:0" width="193" height="121" viewBox="0 0 193 121"><ellipse cx="115" cy="18" rx="42" ry="13" fill="url(#cld)"/><ellipse cx="150" cy="32" rx="28" ry="9" fill="url(#cld)"/><ellipse cx="95" cy="45" rx="22" ry="6" fill="url(#cld)"/><ellipse cx="165" cy="8" rx="22" ry="6" fill="url(#cld)"/><ellipse cx="22" cy="30" rx="16" ry="5" fill="url(#cld)"/><g transform="translate(-3,-1)"><rect x="-12" y="77.5" width="217" height="4" fill="#d8e4ec" opacity=".55"/><path d="M88 78Q89 92 93 100Q100 98 106 90Q111 84 115 78Z" fill="url(#rfl)"/><path d="M119.5 78Q122 95 130 108Q138 112 146 104Q154 92 162 78Z" fill="url(#rfl)"/><path d="M88 77.5Q88.5 66 90 60Q92 56.5 96 57Q101 57.5 104 61Q109 67 115 77.5Z" fill="url(#rkB)"/><path d="M119.5 77.5L120.5 70Q122 60 126 52Q131 45 138 43L143 42.5Q146 46 148 52Q153 62 158 70L162 77.5H134Q133 71 130 71Q127 71 126 77.5Z" fill="url(#rkA)"/></g></svg><i style="left:0.0px;top:16.0px;width:133.0px;height:99.0px;background:rgba(30,30,30,.97);"></i><i style="left:35.0px;top:25.6px;width:15.0px;height:16.2px;background:#f2b000;"></i><i style="left:39.5px;top:29.6px;width:6.0px;height:6.2px;background:rgba(255,255,255,.85)"></i><i style="left:35.0px;top:43.0px;width:15.0px;height:16.7px;background:#1a2470;"></i><i style="left:39.5px;top:47.2px;width:6.0px;height:6.3px;background:rgba(255,255,255,.85)"></i><i style="left:35.0px;top:61.0px;width:15.0px;height:16.0px;background:#f2b000;"></i><i style="left:39.5px;top:65.0px;width:6.0px;height:6.1px;background:rgba(255,255,255,.85)"></i><i style="left:35.0px;top:78.5px;width:15.0px;height:16.3px;background:#4a5870;"></i><i style="left:39.5px;top:82.6px;width:6.0px;height:6.2px;background:rgba(255,255,255,.85)"></i><i style="left:35.0px;top:96.0px;width:15.0px;height:17.5px;background:#f2b000;"></i><i style="left:39.5px;top:100.5px;width:6.0px;height:6.5px;background:rgba(255,255,255,.85)"></i><i style="left:51.5px;top:25.6px;width:30.5px;height:34.1px;background:#8040a0;"></i><i style="left:62.5px;top:38.4px;width:8.5px;height:6.5px;background:rgba(255,255,255,.85)"></i><i style="left:51.5px;top:61.0px;width:30.5px;height:33.8px;background:#107c10;"></i><i style="left:62.5px;top:73.7px;width:8.5px;height:6.5px;background:rgba(255,255,255,.85)"></i><i style="left:51.5px;top:96.0px;width:30.5px;height:17.5px;background:#f2b000;"></i><i style="left:62.5px;top:100.5px;width:8.5px;height:6.5px;background:rgba(255,255,255,.85)"></i><i style="left:84.0px;top:25.6px;width:31.0px;height:34.1px;background:#1e78d0;"></i><i style="left:95.2px;top:38.4px;width:8.5px;height:6.5px;background:rgba(255,255,255,.85)"></i><i style="left:116.5px;top:25.6px;width:15.5px;height:16.2px;background:#6030a0;"></i><i style="left:121.2px;top:29.6px;width:6.2px;height:6.2px;background:rgba(255,255,255,.85)"></i><i style="left:116.5px;top:43.0px;width:15.5px;height:16.7px;background:#f2b000;"></i><i style="left:121.2px;top:47.2px;width:6.2px;height:6.3px;background:rgba(255,255,255,.85)"></i><i style="left:84.0px;top:61.0px;width:31.0px;height:16.0px;background:#f2b000;"></i><i style="left:95.2px;top:65.0px;width:8.5px;height:6.1px;background:rgba(255,255,255,.85)"></i><i style="left:116.5px;top:61.0px;width:15.5px;height:16.0px;background:#303030;"></i><i style="left:121.2px;top:65.0px;width:6.2px;height:6.1px;background:rgba(255,255,255,.85)"></i><i style="left:84.0px;top:78.5px;width:15.0px;height:16.3px;background:#f2b000;"></i><i style="left:88.5px;top:82.6px;width:6.0px;height:6.2px;background:rgba(255,255,255,.85)"></i><i style="left:84.0px;top:96.0px;width:15.0px;height:17.5px;background:#f2b000;"></i><i style="left:88.5px;top:100.5px;width:6.0px;height:6.5px;background:rgba(255,255,255,.85)"></i><i style="left:100.5px;top:78.5px;width:31.5px;height:35.0px;background:#1a4ea0;"></i><i style="left:112.0px;top:91.8px;width:8.5px;height:6.5px;background:rgba(255,255,255,.85)"></i><i style="left:106.0px;top:84.0px;width:20.0px;height:20.0px;background:rgba(245,245,245,.85);"></i><i style="left:3.0px;top:32.0px;width:4.0px;height:4.0px;background:#f2b000;"></i><i style="left:9.0px;top:33.3px;width:21.0px;height:1.4px;background:rgba(255,255,255,.4);"></i><i style="left:3.0px;top:39.0px;width:4.0px;height:4.0px;background:#f2b000;"></i><i style="left:9.0px;top:40.3px;width:21.0px;height:1.4px;background:rgba(255,255,255,.4);"></i><i style="left:3.0px;top:46.0px;width:4.0px;height:4.0px;background:#f2b000;"></i><i style="left:9.0px;top:47.3px;width:21.0px;height:1.4px;background:rgba(255,255,255,.4);"></i><i style="left:3.0px;top:53.0px;width:4.0px;height:4.0px;background:#f2b000;"></i><i style="left:9.0px;top:54.3px;width:21.0px;height:1.4px;background:rgba(255,255,255,.4);"></i><i style="left:3.0px;top:60.0px;width:4.0px;height:4.0px;background:#f2b000;"></i><i style="left:9.0px;top:61.3px;width:21.0px;height:1.4px;background:rgba(255,255,255,.4);"></i><i style="left:3.0px;top:67.0px;width:4.0px;height:4.0px;background:#f2b000;"></i><i style="left:9.0px;top:68.3px;width:21.0px;height:1.4px;background:rgba(255,255,255,.4);"></i><i style="left:3.0px;top:74.0px;width:4.0px;height:4.0px;background:#f2b000;"></i><i style="left:9.0px;top:75.3px;width:21.0px;height:1.4px;background:rgba(255,255,255,.4);"></i><i style="left:0.0px;top:115.0px;width:193.0px;height:6.0px;background:#0d0d0d;"></i><i style="left:6.0px;top:115.5px;width:50.0px;height:5.0px;background:#e8e8e8;"></i></div><div class="lb"><span style="position:relative;left:2px">Denise S</span></div></div>
<div class="card" style="left:17px;top:436px"><div class="im" style="top:16px;height:128px;background:linear-gradient(160deg,rgba(0,0,0,0) 30%,rgba(60,150,230,.35) 55%,rgba(0,0,0,0) 75%),linear-gradient(100deg,#081a40 0%,#0a2a62 40%,#0c4a9e 65%,#0a3c88 85%,#082c68 100%)"><svg style="position:absolute;left:0;top:0" width="193" height="128" viewBox="0 0 193 128"><ellipse cx="130" cy="62" rx="60" ry="40" fill="url(#hglow)"/><polygon points="76,37 126.5,44 126.5,60 76,59" fill="url(#pane)" opacity=".6"/><polygon points="128.5,44 172,36 172,60 128.5,60" fill="url(#pane)" opacity=".6"/><polygon points="76,62 126.5,62 126.5,82 76,88" fill="url(#pane)" opacity=".55"/><polygon points="128.5,62 172,62 172,86 128.5,82" fill="url(#pane)" opacity=".55"/></svg><i style="left:0.0px;top:11.0px;width:74.0px;height:117.0px;background:rgba(26,26,26,.97);"></i><i style="left:32.0px;top:18.6px;width:14.0px;height:13.4px;background:#f09010;"></i><i style="left:36.2px;top:21.8px;width:5.6px;height:5.1px;background:rgba(255,255,255,.85)"></i><i style="left:32.0px;top:33.0px;width:14.0px;height:12.7px;background:#1a2470;"></i><i style="left:36.2px;top:35.9px;width:5.6px;height:4.8px;background:rgba(255,255,255,.85)"></i><i style="left:32.0px;top:46.5px;width:14.0px;height:12.5px;background:#4a5870;"></i><i style="left:36.2px;top:49.4px;width:5.6px;height:4.8px;background:rgba(255,255,255,.85)"></i><i style="left:32.0px;top:60.0px;width:14.0px;height:12.9px;background:#f09010;"></i><i style="left:36.2px;top:63.0px;width:5.6px;height:4.9px;background:rgba(255,255,255,.85)"></i><i style="left:32.0px;top:74.5px;width:14.0px;height:11.5px;background:#f09010;"></i><i style="left:36.2px;top:77.1px;width:5.6px;height:4.4px;background:rgba(255,255,255,.85)"></i><i style="left:46.5px;top:18.6px;width:27.1px;height:27.1px;background:#1e78d0;"></i><i style="left:55.8px;top:27.9px;width:8.5px;height:6.5px;background:rgba(255,255,255,.85)"></i><i style="left:46.5px;top:46.5px;width:27.1px;height:26.4px;background:#8040a0;"></i><i style="left:55.8px;top:55.5px;width:8.5px;height:6.5px;background:rgba(255,255,255,.85)"></i><i style="left:46.5px;top:74.5px;width:27.1px;height:11.5px;background:linear-gradient(90deg,#6a7a50,#c8c0a0);"></i><i style="left:60.0px;top:87.0px;width:13.6px;height:13.0px;background:#f09010;"></i><i style="left:64.1px;top:90.0px;width:5.4px;height:4.9px;background:rgba(255,255,255,.85)"></i><i style="left:3.0px;top:28.0px;width:4.0px;height:3.5px;background:#f09010;"></i><i style="left:9.0px;top:29.0px;width:18.0px;height:1.3px;background:rgba(255,255,255,.4);"></i><i style="left:3.0px;top:34.5px;width:4.0px;height:3.5px;background:#f09010;"></i><i style="left:9.0px;top:35.5px;width:18.0px;height:1.3px;background:rgba(255,255,255,.4);"></i><i style="left:3.0px;top:41.0px;width:4.0px;height:3.5px;background:#f09010;"></i><i style="left:9.0px;top:42.0px;width:18.0px;height:1.3px;background:rgba(255,255,255,.4);"></i><i style="left:3.0px;top:47.5px;width:4.0px;height:3.5px;background:#f09010;"></i><i style="left:9.0px;top:48.5px;width:18.0px;height:1.3px;background:rgba(255,255,255,.4);"></i><i style="left:3.0px;top:54.0px;width:4.0px;height:3.5px;background:#f09010;"></i><i style="left:9.0px;top:55.0px;width:18.0px;height:1.3px;background:rgba(255,255,255,.4);"></i><i style="left:3.0px;top:60.5px;width:4.0px;height:3.5px;background:#f09010;"></i><i style="left:9.0px;top:61.5px;width:18.0px;height:1.3px;background:rgba(255,255,255,.4);"></i><i style="left:3.0px;top:67.0px;width:4.0px;height:3.5px;background:#f09010;"></i><i style="left:9.0px;top:68.0px;width:18.0px;height:1.3px;background:rgba(255,255,255,.4);"></i><i style="left:3.0px;top:3.0px;width:6.0px;height:6.0px;background:#ccc;"></i></div><div class="lb"><span style="position:relative;left:0px"></span></div></div>
<div class="card" style="left:219px;top:436px"><div class="im" style="top:16.5px;height:120px;background:#1b1b1b"><i style="left:18.2px;top:27.4px;width:36.8px;height:17.2px;background:#1d9fa9;"></i><i style="left:32.4px;top:31.8px;width:8.5px;height:6.5px;background:rgba(255,255,255,.85)"></i><i style="left:56.6px;top:27.4px;width:37.2px;height:17.2px;background:#2e8ae0;"></i><i style="left:71.0px;top:31.8px;width:8.5px;height:6.5px;background:rgba(255,255,255,.85)"></i><i style="left:95.6px;top:27.4px;width:37.2px;height:17.2px;background:#1d9fa9;"></i><i style="left:110.0px;top:31.8px;width:8.5px;height:6.5px;background:rgba(255,255,255,.85)"></i><i style="left:141.0px;top:27.4px;width:37.0px;height:17.2px;background:linear-gradient(180deg,#b8a040,#7a7a30 50%,#c0a848);"></i><i style="left:18.2px;top:46.6px;width:36.8px;height:17.2px;background:#6c41c0;"></i><i style="left:32.4px;top:51.0px;width:8.5px;height:6.5px;background:rgba(255,255,255,.85)"></i><i style="left:56.6px;top:46.6px;width:37.2px;height:17.2px;background:linear-gradient(180deg,#a898b8,#6a5a7a 50%,#9a88a8);"></i><i style="left:95.6px;top:46.6px;width:37.2px;height:17.2px;background:#15a13d;"></i><i style="left:110.0px;top:51.0px;width:8.5px;height:6.5px;background:rgba(255,255,255,.85)"></i><i style="left:141.0px;top:46.6px;width:37.0px;height:17.2px;background:#1d9fa9;"></i><i style="left:155.2px;top:51.0px;width:8.5px;height:6.5px;background:rgba(255,255,255,.85)"></i><i style="left:18.2px;top:65.6px;width:36.8px;height:17.2px;background:#e3591f;"></i><i style="left:32.4px;top:69.9px;width:8.5px;height:6.5px;background:rgba(255,255,255,.85)"></i><i style="left:56.6px;top:65.6px;width:18.4px;height:17.2px;background:#2a7fdc;"></i><i style="left:62.1px;top:69.9px;width:7.4px;height:6.5px;background:rgba(255,255,255,.85)"></i><i style="left:75.5px;top:65.6px;width:18.3px;height:17.2px;background:#15a13d;"></i><i style="left:81.0px;top:69.9px;width:7.3px;height:6.5px;background:rgba(255,255,255,.85)"></i><i style="left:95.6px;top:65.6px;width:37.2px;height:17.2px;background:#6c41c0;"></i><i style="left:110.0px;top:69.9px;width:8.5px;height:6.5px;background:rgba(255,255,255,.85)"></i><i style="left:141.0px;top:65.6px;width:18.0px;height:17.2px;background:#15a13d;"></i><i style="left:146.4px;top:69.9px;width:7.2px;height:6.5px;background:rgba(255,255,255,.85)"></i><i style="left:159.5px;top:65.6px;width:18.5px;height:17.2px;background:#b12da6;"></i><i style="left:165.1px;top:69.9px;width:7.4px;height:6.5px;background:rgba(255,255,255,.85)"></i><i style="left:18.2px;top:85.0px;width:36.8px;height:18.0px;background:#a52bbb;"></i><i style="left:32.4px;top:89.8px;width:8.5px;height:6.5px;background:rgba(255,255,255,.85)"></i><i style="left:56.6px;top:85.0px;width:18.4px;height:18.0px;background:#9b30b6;"></i><i style="left:62.1px;top:89.8px;width:7.4px;height:6.5px;background:rgba(255,255,255,.85)"></i><i style="left:75.5px;top:85.0px;width:18.3px;height:18.0px;background:#2a7fdc;"></i><i style="left:81.0px;top:89.8px;width:7.3px;height:6.5px;background:rgba(255,255,255,.85)"></i><i style="left:95.6px;top:85.0px;width:37.2px;height:18.0px;background:#c9223d;"></i><i style="left:110.0px;top:89.8px;width:8.5px;height:6.5px;background:rgba(255,255,255,.85)"></i><i style="left:141.0px;top:85.0px;width:18.0px;height:18.0px;background:#e2521f;"></i><i style="left:146.4px;top:89.8px;width:7.2px;height:6.5px;background:rgba(255,255,255,.85)"></i><i style="left:159.5px;top:85.0px;width:18.5px;height:18.0px;background:#c9223d;"></i><i style="left:165.1px;top:89.8px;width:7.4px;height:6.5px;background:rgba(255,255,255,.85)"></i><b style="left:17px;top:6px;font-size:10.5px;color:#fff;transform:scaleX(.78);transform-origin:0 0">Start</b><i style="left:152.0px;top:9.0px;width:24.0px;height:3.0px;background:rgba(255,255,255,.55);"></i><i style="left:178.0px;top:8.0px;width:5.0px;height:6.0px;background:#fff;"></i></div><div class="lb"><span style="position:relative;left:0px"></span></div></div>
<div class="card" style="left:421px;top:436px"><div class="im" style="top:16px;height:128px;background:linear-gradient(180deg,#101012 0%,#18181a 60%,#141412 100%)"><svg style="position:absolute;left:0;top:0" width="193" height="128" viewBox="0 0 193 128"><path d="M86 0L130 0L122 84L100 84Z" fill="url(#mw)" opacity=".55"/><path d="M100 0L118 0L115 74L106 74Z" fill="url(#mw)" opacity=".7"/><ellipse cx="128" cy="84" rx="36" ry="11" fill="url(#glow)"/><rect x="0" y="85" width="193" height="43" fill="#0e0e0c"/><path d="M0 87Q40 82 80 85L84 72L86 85L90 74L92 85Q140 83 193 86V90H0Z" fill="#0c0c0a"/></svg><i style="left:33.0px;top:20.5px;width:13.0px;height:13.5px;background:#9886d6;"></i><i style="left:36.9px;top:23.7px;width:5.2px;height:5.1px;background:rgba(255,255,255,.85)"></i><i style="left:46.7px;top:20.5px;width:27.6px;height:27.3px;background:#1e78d0;"></i><i style="left:56.2px;top:29.9px;width:8.5px;height:6.5px;background:rgba(255,255,255,.85)"></i><i style="left:75.6px;top:20.5px;width:27.4px;height:27.3px;background:#107c10;"></i><i style="left:85.0px;top:29.9px;width:8.5px;height:6.5px;background:rgba(255,255,255,.85)"></i><i style="left:104.5px;top:20.5px;width:13.1px;height:13.5px;background:#10a0e0;"></i><i style="left:108.4px;top:23.7px;width:5.2px;height:5.1px;background:rgba(255,255,255,.85)"></i><i style="left:104.5px;top:34.5px;width:13.1px;height:13.3px;background:#6030a0;"></i><i style="left:108.4px;top:37.6px;width:5.2px;height:5.1px;background:rgba(255,255,255,.85)"></i><i style="left:119.7px;top:20.5px;width:26.8px;height:13.5px;background:#9886d6;"></i><i style="left:128.8px;top:23.7px;width:8.5px;height:5.1px;background:rgba(255,255,255,.85)"></i><i style="left:119.7px;top:34.5px;width:26.8px;height:13.3px;background:#9886d6;"></i><i style="left:128.8px;top:37.6px;width:8.5px;height:5.1px;background:rgba(255,255,255,.85)"></i><i style="left:147.8px;top:20.5px;width:13.2px;height:13.5px;background:#e0e0e0;"></i><i style="left:151.8px;top:23.7px;width:5.3px;height:5.1px;background:rgba(255,255,255,.85)"></i><i style="left:147.8px;top:34.5px;width:13.2px;height:13.3px;background:#e05020;"></i><i style="left:151.8px;top:37.6px;width:5.3px;height:5.1px;background:rgba(255,255,255,.85)"></i><i style="left:33.0px;top:34.5px;width:13.0px;height:13.3px;background:#1a2a70;"></i><i style="left:36.9px;top:37.6px;width:5.2px;height:5.1px;background:rgba(255,255,255,.85)"></i><i style="left:33.0px;top:48.6px;width:13.0px;height:13.4px;background:#505878;"></i><i style="left:36.9px;top:51.8px;width:5.2px;height:5.1px;background:rgba(255,255,255,.85)"></i><i style="left:46.7px;top:48.6px;width:27.6px;height:27.4px;background:#8040a0;"></i><i style="left:56.2px;top:58.0px;width:8.5px;height:6.5px;background:rgba(255,255,255,.85)"></i><i style="left:75.6px;top:48.6px;width:27.4px;height:27.4px;background:#1a60a8;"></i><i style="left:85.0px;top:58.0px;width:8.5px;height:6.5px;background:rgba(255,255,255,.85)"></i><i style="left:33.0px;top:62.5px;width:13.0px;height:13.5px;background:#9886d6;"></i><i style="left:36.9px;top:65.7px;width:5.2px;height:5.1px;background:rgba(255,255,255,.85)"></i><i style="left:33.0px;top:77.0px;width:13.0px;height:13.0px;background:#9886d6;"></i><i style="left:36.9px;top:80.0px;width:5.2px;height:4.9px;background:rgba(255,255,255,.85)"></i><i style="left:46.7px;top:77.0px;width:27.6px;height:13.0px;background:#108898;"></i><i style="left:56.2px;top:80.0px;width:8.5px;height:4.9px;background:rgba(255,255,255,.85)"></i><i style="left:75.6px;top:77.0px;width:27.4px;height:13.0px;background:#1e78d0;"></i><i style="left:85.0px;top:80.0px;width:8.5px;height:4.9px;background:rgba(255,255,255,.85)"></i><i style="left:119.7px;top:48.6px;width:26.8px;height:13.4px;background:#a08870;"></i><i style="left:128.8px;top:51.8px;width:8.5px;height:5.1px;background:rgba(255,255,255,.85)"></i><i style="left:104.5px;top:62.5px;width:13.1px;height:13.5px;background:#8a78c8;"></i><i style="left:108.4px;top:65.7px;width:5.2px;height:5.1px;background:rgba(255,255,255,.85)"></i><i style="left:124.0px;top:70.0px;width:9.0px;height:12.0px;background:#40a0d8;"></i><i style="left:134.0px;top:70.0px;width:12.0px;height:12.0px;background:#30a070;"></i><i style="left:60.5px;top:91.0px;width:13.8px;height:13.0px;background:#9886d6;"></i><i style="left:64.6px;top:94.0px;width:5.5px;height:4.9px;background:rgba(255,255,255,.85)"></i><i style="left:75.6px;top:91.0px;width:13.4px;height:13.0px;background:#9886d6;"></i><i style="left:79.6px;top:94.0px;width:5.4px;height:4.9px;background:rgba(255,255,255,.85)"></i><i style="left:33.0px;top:104.5px;width:41.3px;height:13.5px;background:#9886d6;"></i><i style="left:49.4px;top:107.7px;width:8.5px;height:5.1px;background:rgba(255,255,255,.85)"></i><i style="left:75.6px;top:104.5px;width:13.4px;height:13.5px;background:#9886d6;"></i><i style="left:79.6px;top:107.7px;width:5.4px;height:5.1px;background:rgba(255,255,255,.85)"></i><i style="left:103.0px;top:91.0px;width:43.0px;height:27.0px;background:linear-gradient(90deg,#5a4a30,#2a3a20 50%,#4a5a40);"></i><i style="left:80.0px;top:52.0px;width:18.0px;height:20.0px;background:rgba(250,250,250,.85);"></i></div><div class="lb"><span style="position:relative;left:0px"></span></div></div>
<div class="card" style="left:623px;top:436px"><div class="im" style="top:16.5px;height:120px;background:#c9611d"><svg style="position:absolute;left:0;top:0" width="193" height="120" viewBox="0 0 193 120"><g opacity=".75"><ellipse cx="35" cy="10" rx="10" ry="3" transform="rotate(-25 35 10)" fill="#a8b890"/><ellipse cx="58" cy="14" rx="12" ry="3.5" transform="rotate(30 58 14)" fill="#90a880"/><ellipse cx="80" cy="8" rx="11" ry="3" transform="rotate(-15 80 8)" fill="#c0c8a8"/><ellipse cx="102" cy="16" rx="12" ry="3.5" transform="rotate(20 102 16)" fill="#8aa078"/><ellipse cx="125" cy="9" rx="10" ry="3" transform="rotate(-30 125 9)" fill="#b0b890"/><ellipse cx="150" cy="14" rx="11" ry="3" transform="rotate(25 150 14)" fill="#98a888"/><ellipse cx="170" cy="6" rx="9" ry="3" transform="rotate(-20 170 6)" fill="#c0c0a0"/><ellipse cx="15" cy="18" rx="8" ry="2.5" transform="rotate(15 15 18)" fill="#a0a888"/></g></svg><i style="left:18.2px;top:27.4px;width:36.8px;height:17.2px;background:#1d9fa9;"></i><i style="left:32.4px;top:31.8px;width:8.5px;height:6.5px;background:rgba(255,255,255,.85)"></i><i style="left:56.6px;top:27.4px;width:37.2px;height:17.2px;background:#2e8ae0;"></i><i style="left:71.0px;top:31.8px;width:8.5px;height:6.5px;background:rgba(255,255,255,.85)"></i><i style="left:95.6px;top:27.4px;width:37.2px;height:17.2px;background:#1d9fa9;"></i><i style="left:110.0px;top:31.8px;width:8.5px;height:6.5px;background:rgba(255,255,255,.85)"></i><i style="left:141.0px;top:27.4px;width:37.0px;height:17.2px;background:linear-gradient(180deg,#b8a040,#7a7a30 50%,#c0a848);"></i><i style="left:18.2px;top:46.6px;width:36.8px;height:17.2px;background:#6c41c0;"></i><i style="left:32.4px;top:51.0px;width:8.5px;height:6.5px;background:rgba(255,255,255,.85)"></i><i style="left:56.6px;top:46.6px;width:37.2px;height:17.2px;background:linear-gradient(180deg,#c8b8a8,#6a5a4a 60%,#3a3a30);"></i><i style="left:95.6px;top:46.6px;width:37.2px;height:17.2px;background:#15a13d;"></i><i style="left:110.0px;top:51.0px;width:8.5px;height:6.5px;background:rgba(255,255,255,.85)"></i><i style="left:141.0px;top:46.6px;width:37.0px;height:17.2px;background:#1d9fa9;"></i><i style="left:155.2px;top:51.0px;width:8.5px;height:6.5px;background:rgba(255,255,255,.85)"></i><i style="left:18.2px;top:65.6px;width:36.8px;height:17.2px;background:#e3591f;"></i><i style="left:32.4px;top:69.9px;width:8.5px;height:6.5px;background:rgba(255,255,255,.85)"></i><i style="left:56.6px;top:65.6px;width:18.4px;height:17.2px;background:#2a7fdc;"></i><i style="left:62.1px;top:69.9px;width:7.4px;height:6.5px;background:rgba(255,255,255,.85)"></i><i style="left:75.5px;top:65.6px;width:18.3px;height:17.2px;background:#15a13d;"></i><i style="left:81.0px;top:69.9px;width:7.3px;height:6.5px;background:rgba(255,255,255,.85)"></i><i style="left:95.6px;top:65.6px;width:37.2px;height:17.2px;background:#6c41c0;"></i><i style="left:110.0px;top:69.9px;width:8.5px;height:6.5px;background:rgba(255,255,255,.85)"></i><i style="left:141.0px;top:65.6px;width:18.0px;height:17.2px;background:#15a13d;"></i><i style="left:146.4px;top:69.9px;width:7.2px;height:6.5px;background:rgba(255,255,255,.85)"></i><i style="left:159.5px;top:65.6px;width:18.5px;height:17.2px;background:#b12da6;"></i><i style="left:165.1px;top:69.9px;width:7.4px;height:6.5px;background:rgba(255,255,255,.85)"></i><i style="left:18.2px;top:85.0px;width:36.8px;height:18.0px;background:#a52bbb;"></i><i style="left:32.4px;top:89.8px;width:8.5px;height:6.5px;background:rgba(255,255,255,.85)"></i><i style="left:56.6px;top:85.0px;width:18.4px;height:18.0px;background:#9b30b6;"></i><i style="left:62.1px;top:89.8px;width:7.4px;height:6.5px;background:rgba(255,255,255,.85)"></i><i style="left:75.5px;top:85.0px;width:18.3px;height:18.0px;background:#2a7fdc;"></i><i style="left:81.0px;top:89.8px;width:7.3px;height:6.5px;background:rgba(255,255,255,.85)"></i><i style="left:95.6px;top:85.0px;width:37.2px;height:18.0px;background:#c9223d;"></i><i style="left:110.0px;top:89.8px;width:8.5px;height:6.5px;background:rgba(255,255,255,.85)"></i><i style="left:141.0px;top:85.0px;width:18.0px;height:18.0px;background:#e2521f;"></i><i style="left:146.4px;top:89.8px;width:7.2px;height:6.5px;background:rgba(255,255,255,.85)"></i><i style="left:159.5px;top:85.0px;width:18.5px;height:18.0px;background:#c9223d;"></i><i style="left:165.1px;top:89.8px;width:7.4px;height:6.5px;background:rgba(255,255,255,.85)"></i><b style="left:17px;top:6px;font-size:10.5px;color:#fff;transform:scaleX(.78);transform-origin:0 0">Start</b><i style="left:152.0px;top:9.0px;width:24.0px;height:3.0px;background:rgba(255,255,255,.55);"></i><i style="left:178.0px;top:8.0px;width:5.0px;height:6.0px;background:#fff;"></i></div><div class="lb"><span style="position:relative;left:0px"></span></div></div>
<div class="card" style="left:825px;top:436px"><div class="im" style="top:16.5px;height:120px;background:#c5931b"><i style="left:18.2px;top:27.4px;width:36.8px;height:17.2px;background:#1d9fa9;"></i><i style="left:32.4px;top:31.8px;width:8.5px;height:6.5px;background:rgba(255,255,255,.85)"></i><i style="left:56.6px;top:27.4px;width:37.2px;height:17.2px;background:#2e8ae0;"></i><i style="left:71.0px;top:31.8px;width:8.5px;height:6.5px;background:rgba(255,255,255,.85)"></i><i style="left:95.6px;top:27.4px;width:37.2px;height:17.2px;background:#1d9fa9;"></i><i style="left:110.0px;top:31.8px;width:8.5px;height:6.5px;background:rgba(255,255,255,.85)"></i><i style="left:141.0px;top:27.4px;width:37.0px;height:17.2px;background:linear-gradient(180deg,#b8a040,#7a7a30 50%,#c0a848);"></i><i style="left:18.2px;top:46.6px;width:36.8px;height:17.2px;background:#6c41c0;"></i><i style="left:32.4px;top:51.0px;width:8.5px;height:6.5px;background:rgba(255,255,255,.85)"></i><i style="left:56.6px;top:46.6px;width:37.2px;height:17.2px;background:linear-gradient(180deg,#6a2a1a,#c84a2a 50%,#e8a070 70%,#6a2a1a);"></i><i style="left:95.6px;top:46.6px;width:37.2px;height:17.2px;background:#15a13d;"></i><i style="left:110.0px;top:51.0px;width:8.5px;height:6.5px;background:rgba(255,255,255,.85)"></i><i style="left:141.0px;top:46.6px;width:37.0px;height:17.2px;background:#1d9fa9;"></i><i style="left:155.2px;top:51.0px;width:8.5px;height:6.5px;background:rgba(255,255,255,.85)"></i><i style="left:18.2px;top:65.6px;width:36.8px;height:17.2px;background:#e3591f;"></i><i style="left:32.4px;top:69.9px;width:8.5px;height:6.5px;background:rgba(255,255,255,.85)"></i><i style="left:56.6px;top:65.6px;width:18.4px;height:17.2px;background:#2a7fdc;"></i><i style="left:62.1px;top:69.9px;width:7.4px;height:6.5px;background:rgba(255,255,255,.85)"></i><i style="left:75.5px;top:65.6px;width:18.3px;height:17.2px;background:#15a13d;"></i><i style="left:81.0px;top:69.9px;width:7.3px;height:6.5px;background:rgba(255,255,255,.85)"></i><i style="left:95.6px;top:65.6px;width:37.2px;height:17.2px;background:#6c41c0;"></i><i style="left:110.0px;top:69.9px;width:8.5px;height:6.5px;background:rgba(255,255,255,.85)"></i><i style="left:141.0px;top:65.6px;width:18.0px;height:17.2px;background:#15a13d;"></i><i style="left:146.4px;top:69.9px;width:7.2px;height:6.5px;background:rgba(255,255,255,.85)"></i><i style="left:159.5px;top:65.6px;width:18.5px;height:17.2px;background:#b12da6;"></i><i style="left:165.1px;top:69.9px;width:7.4px;height:6.5px;background:rgba(255,255,255,.85)"></i><i style="left:18.2px;top:85.0px;width:36.8px;height:18.0px;background:#a52bbb;"></i><i style="left:32.4px;top:89.8px;width:8.5px;height:6.5px;background:rgba(255,255,255,.85)"></i><i style="left:56.6px;top:85.0px;width:18.4px;height:18.0px;background:#9b30b6;"></i><i style="left:62.1px;top:89.8px;width:7.4px;height:6.5px;background:rgba(255,255,255,.85)"></i><i style="left:75.5px;top:85.0px;width:18.3px;height:18.0px;background:#2a7fdc;"></i><i style="left:81.0px;top:89.8px;width:7.3px;height:6.5px;background:rgba(255,255,255,.85)"></i><i style="left:95.6px;top:85.0px;width:37.2px;height:18.0px;background:#c9223d;"></i><i style="left:110.0px;top:89.8px;width:8.5px;height:6.5px;background:rgba(255,255,255,.85)"></i><i style="left:141.0px;top:85.0px;width:18.0px;height:18.0px;background:#e2521f;"></i><i style="left:146.4px;top:89.8px;width:7.2px;height:6.5px;background:rgba(255,255,255,.85)"></i><i style="left:159.5px;top:85.0px;width:18.5px;height:18.0px;background:#c9223d;"></i><i style="left:165.1px;top:89.8px;width:7.4px;height:6.5px;background:rgba(255,255,255,.85)"></i><b style="left:17px;top:6px;font-size:10.5px;color:#fff;transform:scaleX(.78);transform-origin:0 0">Start</b><i style="left:152.0px;top:9.0px;width:24.0px;height:3.0px;background:rgba(255,255,255,.55);"></i><i style="left:178.0px;top:8.0px;width:5.0px;height:6.0px;background:#fff;"></i></div><div class="lb"><span style="position:relative;left:0px"></span></div></div>
<div class="card" style="left:1027px;top:436px"><div class="im" style="top:16px;height:128px;background:linear-gradient(180deg,#1a5cb4 0%,#2f78c8 18.0%,#5e98d4 37.7%,#9cbcdc 49.2%,#bcd0e0 54.5%,#86aed0 55.2%,#a4c2da 61.7%,#80a8cc 74.2%,#4a80bc 100%)"><svg style="position:absolute;left:0;top:0" width="193" height="128" viewBox="0 0 193 128"><ellipse cx="115" cy="18" rx="42" ry="13" fill="url(#cld)"/><ellipse cx="150" cy="32" rx="28" ry="9" fill="url(#cld)"/><ellipse cx="95" cy="45" rx="22" ry="6" fill="url(#cld)"/><ellipse cx="165" cy="8" rx="22" ry="6" fill="url(#cld)"/><ellipse cx="22" cy="30" rx="16" ry="5" fill="url(#cld)"/><g transform="translate(3,-7.5)"><rect x="-12" y="77.5" width="217" height="4" fill="#d8e4ec" opacity=".55"/><path d="M88 78Q89 92 93 100Q100 98 106 90Q111 84 115 78Z" fill="url(#rfl)"/><path d="M119.5 78Q122 95 130 108Q138 112 146 104Q154 92 162 78Z" fill="url(#rfl)"/><path d="M88 77.5Q88.5 66 90 60Q92 56.5 96 57Q101 57.5 104 61Q109 67 115 77.5Z" fill="url(#rkB)"/><path d="M119.5 77.5L120.5 70Q122 60 126 52Q131 45 138 43L143 42.5Q146 46 148 52Q153 62 158 70L162 77.5H134Q133 71 130 71Q127 71 126 77.5Z" fill="url(#rkA)"/></g></svg><i style="left:0.0px;top:16.0px;width:133.0px;height:99.0px;background:rgba(30,30,30,.97);"></i><i style="left:35.0px;top:25.6px;width:15.0px;height:16.2px;background:#f2b000;"></i><i style="left:39.5px;top:29.6px;width:6.0px;height:6.2px;background:rgba(255,255,255,.85)"></i><i style="left:35.0px;top:43.0px;width:15.0px;height:16.7px;background:#1a2470;"></i><i style="left:39.5px;top:47.2px;width:6.0px;height:6.3px;background:rgba(255,255,255,.85)"></i><i style="left:35.0px;top:61.0px;width:15.0px;height:16.0px;background:#f2b000;"></i><i style="left:39.5px;top:65.0px;width:6.0px;height:6.1px;background:rgba(255,255,255,.85)"></i><i style="left:35.0px;top:78.5px;width:15.0px;height:16.3px;background:#4a5870;"></i><i style="left:39.5px;top:82.6px;width:6.0px;height:6.2px;background:rgba(255,255,255,.85)"></i><i style="left:35.0px;top:96.0px;width:15.0px;height:17.5px;background:#f2b000;"></i><i style="left:39.5px;top:100.5px;width:6.0px;height:6.5px;background:rgba(255,255,255,.85)"></i><i style="left:51.5px;top:25.6px;width:30.5px;height:34.1px;background:#8040a0;"></i><i style="left:62.5px;top:38.4px;width:8.5px;height:6.5px;background:rgba(255,255,255,.85)"></i><i style="left:51.5px;top:61.0px;width:30.5px;height:33.8px;background:#107c10;"></i><i style="left:62.5px;top:73.7px;width:8.5px;height:6.5px;background:rgba(255,255,255,.85)"></i><i style="left:51.5px;top:96.0px;width:30.5px;height:17.5px;background:#f2b000;"></i><i style="left:62.5px;top:100.5px;width:8.5px;height:6.5px;background:rgba(255,255,255,.85)"></i><i style="left:84.0px;top:25.6px;width:31.0px;height:34.1px;background:#1e78d0;"></i><i style="left:95.2px;top:38.4px;width:8.5px;height:6.5px;background:rgba(255,255,255,.85)"></i><i style="left:116.5px;top:25.6px;width:15.5px;height:16.2px;background:#6030a0;"></i><i style="left:121.2px;top:29.6px;width:6.2px;height:6.2px;background:rgba(255,255,255,.85)"></i><i style="left:116.5px;top:43.0px;width:15.5px;height:16.7px;background:#f2b000;"></i><i style="left:121.2px;top:47.2px;width:6.2px;height:6.3px;background:rgba(255,255,255,.85)"></i><i style="left:84.0px;top:61.0px;width:31.0px;height:16.0px;background:#f2b000;"></i><i style="left:95.2px;top:65.0px;width:8.5px;height:6.1px;background:rgba(255,255,255,.85)"></i><i style="left:116.5px;top:61.0px;width:15.5px;height:16.0px;background:#303030;"></i><i style="left:121.2px;top:65.0px;width:6.2px;height:6.1px;background:rgba(255,255,255,.85)"></i><i style="left:84.0px;top:78.5px;width:15.0px;height:16.3px;background:#f2b000;"></i><i style="left:88.5px;top:82.6px;width:6.0px;height:6.2px;background:rgba(255,255,255,.85)"></i><i style="left:84.0px;top:96.0px;width:15.0px;height:17.5px;background:#f2b000;"></i><i style="left:88.5px;top:100.5px;width:6.0px;height:6.5px;background:rgba(255,255,255,.85)"></i><i style="left:100.5px;top:78.5px;width:31.5px;height:35.0px;background:#1a4ea0;"></i><i style="left:112.0px;top:91.8px;width:8.5px;height:6.5px;background:rgba(255,255,255,.85)"></i><i style="left:106.0px;top:84.0px;width:20.0px;height:20.0px;background:rgba(245,245,245,.85);"></i><i style="left:3.0px;top:32.0px;width:4.0px;height:4.0px;background:#f2b000;"></i><i style="left:9.0px;top:33.3px;width:21.0px;height:1.4px;background:rgba(255,255,255,.4);"></i><i style="left:3.0px;top:39.0px;width:4.0px;height:4.0px;background:#f2b000;"></i><i style="left:9.0px;top:40.3px;width:21.0px;height:1.4px;background:rgba(255,255,255,.4);"></i><i style="left:3.0px;top:46.0px;width:4.0px;height:4.0px;background:#f2b000;"></i><i style="left:9.0px;top:47.3px;width:21.0px;height:1.4px;background:rgba(255,255,255,.4);"></i><i style="left:3.0px;top:53.0px;width:4.0px;height:4.0px;background:#f2b000;"></i><i style="left:9.0px;top:54.3px;width:21.0px;height:1.4px;background:rgba(255,255,255,.4);"></i><i style="left:3.0px;top:60.0px;width:4.0px;height:4.0px;background:#f2b000;"></i><i style="left:9.0px;top:61.3px;width:21.0px;height:1.4px;background:rgba(255,255,255,.4);"></i><i style="left:3.0px;top:67.0px;width:4.0px;height:4.0px;background:#f2b000;"></i><i style="left:9.0px;top:68.3px;width:21.0px;height:1.4px;background:rgba(255,255,255,.4);"></i><i style="left:3.0px;top:74.0px;width:4.0px;height:4.0px;background:#f2b000;"></i><i style="left:9.0px;top:75.3px;width:21.0px;height:1.4px;background:rgba(255,255,255,.4);"></i><i style="left:0.0px;top:122.0px;width:193.0px;height:6.0px;background:#0d0d0d;"></i><i style="left:6.0px;top:122.5px;width:50.0px;height:5.0px;background:#e8e8e8;"></i></div><div class="lb"><span style="position:relative;left:0px"></span></div></div>
</div>
<!--/THUMBS-->
<!--PANEL-->
<style>
.pl{position:absolute;height:1.5px;background:#dedede}
.url{position:absolute;font-size:16.3px;color:#111;line-height:20px;white-space:nowrap}
.app{position:absolute;font-size:17.5px;color:#111;line-height:22px;white-space:nowrap}
.gbtn{position:absolute;left:1402px;width:170px;background:#717171;border-radius:3px;color:#fff;font-size:11.6px;text-align:center;box-shadow:0 1px 1px rgba(0,0,0,.25)}
</style>
<div class="a" style="left:731px;top:769px;width:39px;height:40px;background:#fff"></div>
<div class="a" style="left:800px;top:767px;width:54px;height:44px;background:#fff"></div>
<div class="a" style="left:150px;top:1030px;width:280px;height:42px;background:#fff"></div>
<div class="a" style="left:1295px;top:1030px;width:280px;height:42px;background:#fff"></div>
<div class="a" style="left:883px;top:857px;width:504px;height:49px;background:#fff"></div>
<div class="a" style="left:1385px;top:915px;width:192px;height:47px;background:#fff"></div>
<div class="a" style="left:150px;top:860px;width:315px;height:35px;background:#fff"></div>
<div class="a" style="left:881px;top:806px;width:44px;height:42px;background:#fff"></div>
<svg class="a" style="left:0;top:0" width="200" height="720" viewBox="0 0 200 720"><g transform="translate(165.4,694.6) rotate(42)"><path d="M-5.6 -0.5Q-7 8 0 14.7Q7 8 5.6 -0.5Z" fill="#c8361e"/>
<path d="M-3.4 0Q-4 7 0 11.5Q4 7 3.4 0Z" fill="#f4b050"/>
<path d="M-7 -6Q-11.8 -0.5 -9.3 9.5Q-7.5 4.5 -4.5 -0.5Z" fill="#5aaedc"/>
<path d="M7 -6Q11.8 -0.5 9.3 9.5Q7.5 4.5 4.5 -0.5Z" fill="#5aaedc"/>
<path d="M0 -29C5.5 -25 7.6 -16 7.4 -8Q7 -3 5.7 -0.5H-5.7Q-7 -3 -7.4 -8C-7.6 -16 -5.5 -25 0 -29Z" fill="#3b8dc0"/>
<path d="M0 -29C3.8 -26.5 6 -23 6.9 -19.5Q0 -17.5 -6.9 -19.5C-6 -23 -3.8 -26.5 0 -29Z" fill="#64b6e4"/></g></svg>
<div class="a" style="left:195px;top:677px;font-size:18.5px;font-weight:bold;color:#555;line-height:20px">Quick Launch</div>
<div class="a" style="left:154.5px;top:711.5px;width:470px;height:36.5px;background:#fff;border:1px solid #c8c8c8;border-radius:4px 0 0 4px"></div>
<div class="a" style="left:623px;top:711px;width:142px;height:37px;background:#52a886;border-radius:0 4px 4px 0"></div>
<svg class="a" style="left:637px;top:721px" width="16" height="16" viewBox="0 0 16 16"><path d="M1 1L13 8L1 15Z" fill="#fff"/></svg>
<div class="a" style="left:655.5px;top:720px;font-size:15.4px;color:#fff;line-height:18px">Quick Launch</div>
<div class="pl" style="left:155px;top:758.5px;width:897px"></div>
<div class="pl" style="left:1313px;top:758.5px;width:265px"></div>
<div class="a" style="left:1318px;top:709px;width:122px;height:37px;background:#a1a1a1;border-radius:4px;border:1px solid #999"></div>
<svg class="a" style="left:1343px;top:719px" width="16" height="16" viewBox="0 0 16 16"><path d="M1 0.5L13 7.5L1 14.5Z" fill="#fff"/></svg>
<div class="a" style="left:1362px;top:718px;font-size:15.4px;color:#fff;line-height:18px">Launch</div>
<div class="a" style="left:1456px;top:709px;width:121px;height:37px;background:#f0c2ba;border-radius:4px;border:1px solid #e6a298"></div>
<svg class="a" style="left:1484px;top:719px" width="16" height="16" viewBox="0 0 16 16"><path d="M3 3L12 12M12 3L3 12" stroke="#fff" stroke-width="3.4"/></svg>
<div class="a" style="left:1504px;top:718px;font-size:15.4px;color:#fff;line-height:18px">Delete</div>
<div class="a" style="left:150px;top:776px;font-size:18.5px;color:#555;line-height:20px">URLs</div>
<div class="a" style="left:874px;top:776px;font-size:18.5px;color:#555;line-height:20px">APPs</div>
<div class="a" style="left:802px;top:775px;width:32px;height:28px;background:#6b6b6b;border-radius:3px"></div>
<svg class="a" style="left:802px;top:775px" width="32" height="28" viewBox="0 0 32 28"><path d="M16 8.5V19.5M10.5 14H21.5" stroke="#fff" stroke-width="3.4"/></svg>
<div class="a" style="left:1537px;top:775px;width:32px;height:28px;background:#6b6b6b;border-radius:3px"></div>
<svg class="a" style="left:1537px;top:775px" width="32" height="28" viewBox="0 0 32 28"><path d="M16 8.5V19.5M10.5 14H21.5" stroke="#fff" stroke-width="3.4"/></svg>
<div class="a" style="left:862px;top:810px;width:1.5px;height:218px;background:#d0d0d0"></div>
<div class="a" style="left:1598.5px;top:774px;width:1.5px;height:296px;background:#9a9a9a"></div>
<svg class="a" style="left:160px;top:808px" width="35" height="34" viewBox="0 0 35 34">
<rect x="0" y="0" width="16" height="16" fill="#f35325"/><rect x="18" y="0" width="16" height="16" fill="#81bc06"/>
<rect x="0" y="17.5" width="16" height="16" fill="#05a6f0"/><rect x="18" y="17.5" width="16" height="16" fill="#ffba08"/></svg>
<div class="url" style="left:206px;top:814.5px">http://www.microsoft.com</div>
<div class="pl" style="left:155px;top:852px;width:674px"></div>
<svg class="a" style="left:159px;top:861px" width="36" height="35" viewBox="0 0 36 35">
<defs><radialGradient id="gl" cx="40%" cy="35%" r="65%"><stop offset="0" stop-color="#c8e0f0"/><stop offset=".45" stop-color="#4a8ab8"/><stop offset="1" stop-color="#1a3a6a"/></radialGradient></defs>
<circle cx="17.5" cy="17.5" r="16" fill="url(#gl)"/>
<path d="M8 12Q12 8 16 10Q18 14 14 17Q10 19 8 16Z" fill="#e8f0e0" opacity=".8"/>
<path d="M20 20Q25 18 27 23Q24 28 20 26Z" fill="#d0e0a0" opacity=".7"/>
</svg>
<div class="url" style="left:205px;top:867.5px">http://www.discoveryeducation.com</div>
<div class="pl" style="left:155px;top:906px;width:674px"></div>
<svg class="a" style="left:162px;top:920px" width="36" height="36" viewBox="0 0 36 36">
<path d="M0.5 1.5H33L35 3.5V35H2.5L0.5 33Z" fill="#a00a0a"/>
<rect x="0.5" y="0.5" width="32.5" height="32.5" fill="#e8150f"/>
<g fill="#b00c0c"><ellipse cx="9" cy="9" rx="4" ry="2.5"/><ellipse cx="24" cy="9" rx="4" ry="2.5"/><ellipse cx="9" cy="23" rx="4" ry="2.5"/><ellipse cx="24" cy="23" rx="4" ry="2.5"/></g>
</svg>
<div class="url" style="left:208px;top:927px">http://www.lego.com</div>
<div class="pl" style="left:160px;top:969px;width:674px"></div>
<svg class="a" style="left:163px;top:980px" width="35" height="35" viewBox="0 0 35 35">
<rect x="0" y="0" width="34.5" height="34.5" fill="#0a0a0a"/>
<path d="M10 5H25V9H27V22H24V26H26V31H9V26H11V22H8V9H10Z" fill="#e8641a"/>
<rect x="11.5" y="13" width="5" height="5" fill="#fff"/><rect x="19" y="13" width="5" height="5" fill="#fff"/>
<rect x="13.5" y="14.5" width="2" height="2.5" fill="#222"/><rect x="21" y="14.5" width="2" height="2.5" fill="#222"/>
<rect x="4.5" y="12" width="2" height="8" fill="#e8d040"/><rect x="28.5" y="12" width="2" height="8" fill="#e8d040"/>
<g fill="#a83a0a"><rect x="12" y="26" width="3" height="3"/><rect x="17" y="26" width="3" height="3"/><rect x="22" y="26" width="2" height="3"/></g>
</svg>
<div class="url" style="left:209px;top:986px">http://www.BrainPop.com</div>
<div class="pl" style="left:154px;top:1025px;width:676px"></div>
<svg class="a" style="left:890.5px;top:812px" width="32" height="30" viewBox="0 0 32 30"><rect x="16.5" y="3.5" width="12" height="23.5" rx="1" fill="#fff" stroke="#2b5aa6" stroke-width="1.6"/><rect x="17" y="6.5" width="8.5" height="1.5" fill="#2b5aa6"/><rect x="17" y="9.9" width="8.5" height="1.5" fill="#2b5aa6"/><rect x="17" y="13.3" width="8.5" height="1.5" fill="#2b5aa6"/><rect x="17" y="16.7" width="8.5" height="1.5" fill="#2b5aa6"/><rect x="17" y="20.1" width="8.5" height="1.5" fill="#2b5aa6"/><rect x="17" y="23.5" width="8.5" height="1.5" fill="#2b5aa6"/><path d="M1 5L16.6 1.5V28.5L1 26Z" fill="#2b5aa6"/><text x="8.8" y="21" font-family="Liberation Sans" font-weight="700" font-size="14.5" fill="#fff" text-anchor="middle">W</text></svg>
<div class="app" style="left:931.5px;top:816.5px">Word</div>
<div class="pl" style="left:884px;top:853px;width:691px"></div>
<svg class="a" style="left:891px;top:864.5px" width="32" height="30" viewBox="0 0 32 30"><rect x="16.5" y="3.5" width="12" height="23.5" rx="1" fill="#fff" stroke="#207347" stroke-width="1.6"/><rect x="17" y="6.5" width="10" height="1.3" fill="#207347"/><rect x="17" y="9.9" width="10" height="1.3" fill="#207347"/><rect x="17" y="13.3" width="10" height="1.3" fill="#207347"/><rect x="17" y="16.7" width="10" height="1.3" fill="#207347"/><rect x="17" y="20.1" width="10" height="1.3" fill="#207347"/><rect x="17" y="23.5" width="10" height="1.3" fill="#207347"/><rect x="21.5" y="5" width="1.3" height="20" fill="#207347"/><path d="M1 5L16.6 1.5V28.5L1 26Z" fill="#207347"/><text x="8.8" y="21" font-family="Liberation Sans" font-weight="700" font-size="14.5" fill="#fff" text-anchor="middle">X</text></svg>
<div class="app" style="left:931.5px;top:868.5px">Excel</div>
<div class="pl" style="left:884px;top:908px;width:690px"></div>
<svg class="a" style="left:891px;top:921px" width="32" height="30" viewBox="0 0 32 30"><rect x="16.5" y="4" width="10.5" height="22.5" rx="1.5" fill="#fff" stroke="#80357e" stroke-width="1.6"/><rect x="17" y="7.0" width="7.5" height="1.5" fill="#80357e"/><rect x="17" y="10.6" width="7.5" height="1.5" fill="#80357e"/><rect x="17" y="14.2" width="7.5" height="1.5" fill="#80357e"/><rect x="17" y="17.8" width="7.5" height="1.5" fill="#80357e"/><rect x="17" y="21.4" width="7.5" height="1.5" fill="#80357e"/><rect x="26.5" y="8" width="2.2" height="5" fill="#80357e"/><rect x="26.5" y="15" width="2.2" height="5" fill="#80357e"/><path d="M1 5L16.6 1.5V28.5L1 26Z" fill="#80357e"/><text x="8.8" y="21" font-family="Liberation Sans" font-weight="700" font-size="14.5" fill="#fff" text-anchor="middle">N</text></svg>
<div class="app" style="left:931.5px;top:924.5px">OneNote</div>
<div class="pl" style="left:884px;top:964.5px;width:692px"></div>
<svg class="a" style="left:891px;top:978px" width="32" height="30" viewBox="0 0 32 30"><ellipse cx="22.5" cy="8.0" rx="6" ry="2.6" fill="#fff" stroke="#a8282c" stroke-width="1.5"/><ellipse cx="22.5" cy="13.5" rx="6" ry="2.6" fill="#fff" stroke="#a8282c" stroke-width="1.5"/><ellipse cx="22.5" cy="19.0" rx="6" ry="2.6" fill="#fff" stroke="#a8282c" stroke-width="1.5"/><ellipse cx="22.5" cy="24.5" rx="6" ry="2.6" fill="#fff" stroke="#a8282c" stroke-width="1.5"/><rect x="16.5" y="8" width="12" height="16.5" fill="#fff"/><path d="M16.5 8V24.5A6 2.6 0 0 0 28.5 24.5V8" fill="none" stroke="#a8282c" stroke-width="1.5"/><path d="M16.5 13.5A6 2.6 0 0 0 28.5 13.5" fill="none" stroke="#a8282c" stroke-width="1.5"/><path d="M16.5 19.0A6 2.6 0 0 0 28.5 19.0" fill="none" stroke="#a8282c" stroke-width="1.5"/><path d="M16.5 24.5A6 2.6 0 0 0 28.5 24.5" fill="none" stroke="#a8282c" stroke-width="1.5"/><ellipse cx="22.5" cy="8" rx="6" ry="2.6" fill="#fff" stroke="#a8282c" stroke-width="1.5"/><path d="M1 5L16.6 1.5V28.5L1 26Z" fill="#a8282c"/><text x="8.8" y="21" font-family="Liberation Sans" font-weight="700" font-size="14.5" fill="#fff" text-anchor="middle">A</text></svg>
<div class="app" style="left:931.5px;top:981.5px">Access</div>
<div class="pl" style="left:885px;top:1024px;width:690px"></div>
<div class="gbtn" style="top:807px;height:38.5px;line-height:37px">Store Application</div>
<div class="gbtn" style="top:860.5px;height:37px;line-height:36px">Desktop Application</div>
<!--/PANEL-->
</body></html>
